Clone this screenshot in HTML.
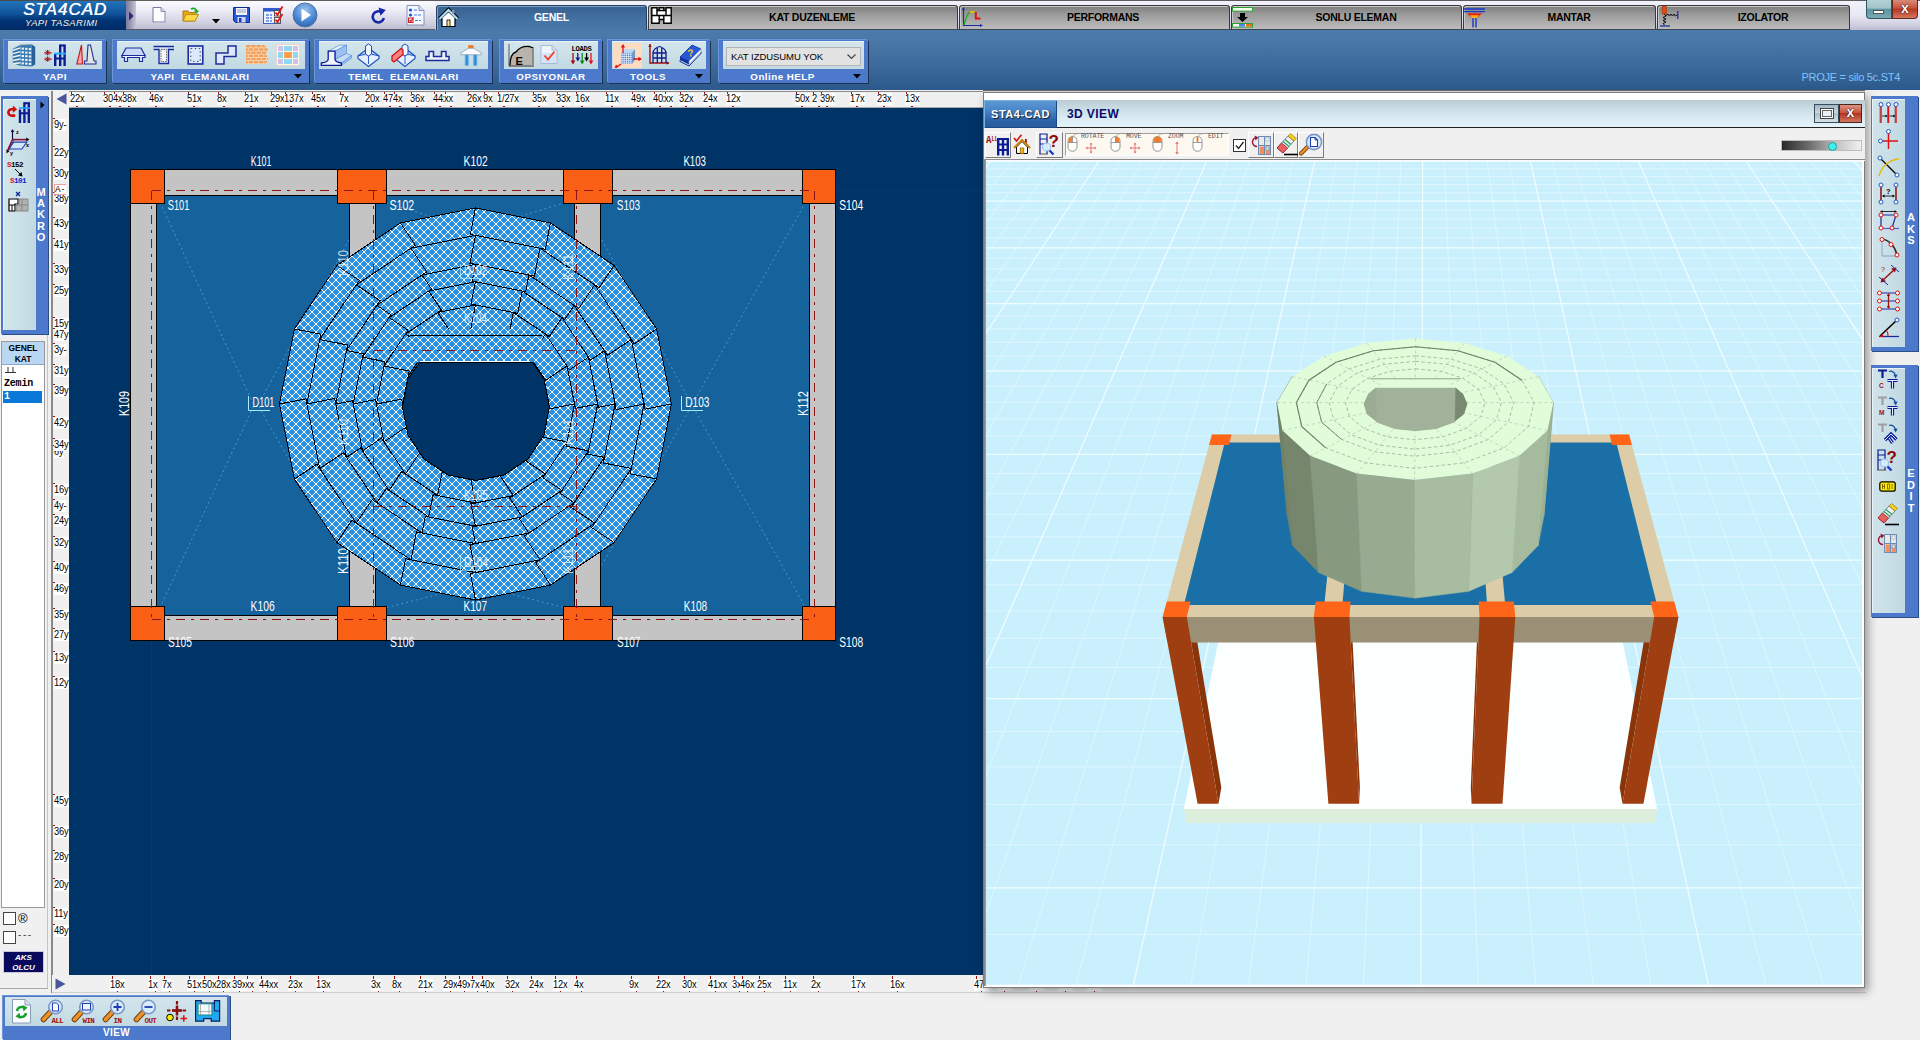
<!DOCTYPE html>
<html><head><meta charset="utf-8"><title>STA4CAD</title>
<style>

html,body{margin:0;padding:0}
body{width:1920px;height:1040px;overflow:hidden;background:#f0f0f0;position:relative;font-family:"Liberation Sans",sans-serif;font-size:11px;color:#000}
.a{position:absolute}
svg{position:absolute;overflow:visible}
.rib{left:0;top:30px;width:1920px;height:60px;background:linear-gradient(#4b7aab 0%,#4a78a8 15%,#3d6a9c 60%,#2b598b 100%)}
.grp{background:#4c79cb;box-shadow:1px 1px 0 #1c3050, -1px -1px 0 #6d95d8;}
.grp .in{position:absolute;left:4px;right:4px;top:1px;height:28px;background:linear-gradient(#d4e6ec,#c2d9e2);box-shadow:inset 0 1px 0 #e8f4f8}
.grp .lb{position:absolute;left:0;right:0;top:30px;height:13px;line-height:13px;text-align:center;color:#fff;font-weight:bold;font-size:9.8px;letter-spacing:.45px;white-space:pre}
.tab{top:5px;height:24px;background:linear-gradient(#7e7e7e 0%,#9a9a9a 35%,#bcbcbc 100%);border:1px solid #3a3a3a;border-bottom:none;border-radius:3px 3px 0 0;box-sizing:border-box;font-weight:bold;font-size:11px;line-height:23px;text-align:center;color:#000;box-shadow:inset 1px 1px 0 #c8c8c8}
.rl{position:absolute;font-size:10px;line-height:12px;letter-spacing:-.2px;transform:scaleX(.93);transform-origin:0 0;background:#fff;white-space:nowrap;color:#000}
.vt{position:absolute;color:#fff;font-weight:bold;font-size:11px;line-height:11.5px;text-align:center;width:10px}

</style></head>
<body>
<div class="a" style="left:0;top:0;width:1920px;height:30px;background:linear-gradient(#f2f2fc 0%,#e9e9f5 50%,#cdcddf 85%,#bcbcd0 100%)"></div>
<div class="a" style="left:0;top:0;width:1920px;height:1px;background:#5d5d5d"></div>
<div class="a" style="left:0;top:0;width:126px;height:30px;background:linear-gradient(#2476bd 0%,#10539a 45%,#003273 70%,#002b66 100%);overflow:hidden"><div class="a" style="left:0;top:0;width:127px;height:1px;background:#4a4a4a"></div><div class="a" style="left:23px;top:1px;width:90px;font-style:italic;font-size:17px;line-height:18px;color:#fff;letter-spacing:1px;text-shadow:.4px 0 0 #fff;white-space:nowrap">STA4CAD</div><div class="a" style="left:25px;top:17px;width:90px;font-style:italic;font-size:9.5px;line-height:11px;color:#f4f0e4;letter-spacing:.35px;white-space:nowrap">YAPI TASARIMI</div></div>
<div class="a" style="left:126px;top:1px;width:309px;height:28px;background:linear-gradient(#fbfbff 0%,#ececf6 35%,#d2d2e2 75%,#bcbcd0 100%);border-bottom:1px solid #5a5a6a"></div>
<div class="a" style="left:126px;top:1px;width:10px;height:28px;background:linear-gradient(90deg,#7c7c9c,#a4a4bc 60%,#c8c8da)"></div>
<svg class="a" style="left:128px;top:11px" width="6" height="10" viewBox="0 0 6 10"><path d="M1 0.5 L5.5 5 L1 9.5Z" fill="#26267a"/></svg>
<div class="a" style="left:436px;top:5px;width:211px;height:26px;background:linear-gradient(#35608f,#4573a4 60%,#4a78a8);border:1px solid #243f60;border-bottom:none;border-radius:3px 3px 0 0;box-sizing:border-box;box-shadow:inset 1px 1px 0 #7da0c6"></div>
<div class="a" style="left:436px;top:5px;width:211px;height:25px;line-height:25px;text-align:center;padding-left:20px;box-sizing:border-box;color:#fff;font-weight:bold;font-size:10.5px;letter-spacing:-.2px">GENEL</div>
<div class="a tab" style="left:648px;width:310px"></div>
<div class="a" style="left:712px;top:5px;width:200px;height:25px;line-height:25px;text-align:center;font-weight:bold;font-size:10.5px;letter-spacing:-.25px">KAT DUZENLEME</div>
<div class="a tab" style="left:959px;width:271px"></div>
<div class="a" style="left:1003px;top:5px;width:200px;height:25px;line-height:25px;text-align:center;font-weight:bold;font-size:10.5px;letter-spacing:-.25px">PERFORMANS</div>
<div class="a tab" style="left:1231px;width:231px"></div>
<div class="a" style="left:1256px;top:5px;width:200px;height:25px;line-height:25px;text-align:center;font-weight:bold;font-size:10.5px;letter-spacing:-.25px">SONLU ELEMAN</div>
<div class="a tab" style="left:1463px;width:193px"></div>
<div class="a" style="left:1469px;top:5px;width:200px;height:25px;line-height:25px;text-align:center;font-weight:bold;font-size:10.5px;letter-spacing:-.25px">MANTAR</div>
<div class="a tab" style="left:1657px;width:193px"></div>
<div class="a" style="left:1663px;top:5px;width:200px;height:25px;line-height:25px;text-align:center;font-weight:bold;font-size:10.5px;letter-spacing:-.25px">IZOLATOR</div>
<div class="a" style="left:648px;top:29px;width:1202px;height:1px;background:#3c4652"></div>
<div class="a" style="left:1866px;top:0;width:26px;height:19px;background:linear-gradient(#b4d2d6,#a0c4ca 45%,#5e94a0 52%,#7aaab4);border:1px solid #2e5662;border-top:none;border-radius:0 0 0 4px;box-sizing:border-box"></div>
<div class="a" style="left:1873px;top:10px;width:11px;height:4px;background:#fff;border:1px solid #555;box-sizing:border-box"></div>
<div class="a" style="left:1892px;top:0;width:26px;height:19px;background:linear-gradient(#d98a7a,#c8523d 45%,#b7351f 50%,#d47762);border:1px solid #5e2a20;border-top:none;border-radius:0 0 4px 0;box-sizing:border-box;color:#fff;font-weight:bold;font-size:14px;line-height:17px;text-align:center;text-shadow:0 0 1px #000,0 0 1px #000">x</div>
<div class="a rib"></div>
<div class="a grp" style="left:4px;top:40px;width:102px;height:43px"><div class="in"></div><div class="lb" style="">YAPI</div></div>
<div class="a grp" style="left:113px;top:40px;width:196px;height:43px"><div class="in"></div><div class="lb" style="padding-right:22px;box-sizing:border-box;">YAPI  ELEMANLARI</div><svg style="left:181px;top:34px" width="8" height="5"><path d="M0 0H8L4 4.5Z" fill="#000"/></svg></div>
<div class="a grp" style="left:315px;top:40px;width:177px;height:43px"><div class="in"></div><div class="lb" style="">TEMEL  ELEMANLARI</div></div>
<div class="a grp" style="left:500px;top:40px;width:102px;height:43px"><div class="in"></div><div class="lb" style="">OPSIYONLAR</div></div>
<div class="a grp" style="left:608px;top:40px;width:102px;height:43px"><div class="in"></div><div class="lb" style="padding-right:22px;box-sizing:border-box;">TOOLS</div><svg style="left:87px;top:34px" width="8" height="5"><path d="M0 0H8L4 4.5Z" fill="#000"/></svg></div>
<div class="a grp" style="left:719px;top:40px;width:149px;height:43px"><div class="in"></div><div class="lb" style="padding-right:22px;box-sizing:border-box;">Online HELP</div><svg style="left:134px;top:34px" width="8" height="5"><path d="M0 0H8L4 4.5Z" fill="#000"/></svg></div>
<div class="a" style="left:726px;top:47px;width:135px;height:19px;background:#e2e2e2;border:1px solid #b4b4b4;box-sizing:border-box;font-size:9.5px;line-height:17px;padding-left:4px;letter-spacing:-.05px;white-space:nowrap">KAT IZDUSUMU YOK</div>
<svg class="a" style="left:847px;top:54px" width="9" height="6" viewBox="0 0 9 6"><path d="M0.5 0.5L4.5 4.5L8.5 0.5" fill="none" stroke="#444" stroke-width="1.2"/></svg>
<div class="a" style="left:1780px;top:70px;width:120px;text-align:right;font-size:11px;line-height:14px;color:#80c2fa;letter-spacing:-.27px;white-space:nowrap">PROJE = silo 5c.ST4</div>
<svg class="a" style="left:152px;top:7px" width="14" height="16" viewBox="0 0 14 16"><path d="M1 .5H9L13 4.5V15H1Z" fill="#fdfdff" stroke="#7878a0"/><path d="M9 .5V4.5H13" fill="#dcdcec" stroke="#8c8cac"/><path d="M2 15.5H13.5V5" fill="none" stroke="#b8b8d0"/></svg>
<svg class="a" style="left:182px;top:6px" width="18" height="17" viewBox="0 0 18 17"><path d="M1 5H6L7.5 6.5H13V15H1Z" fill="#e8a818" stroke="#b07808"/><path d="M1 15L4 8.5H16.5L13 15Z" fill="#fcd848" stroke="#c08c10"/><path d="M9 3C11.5 1.5 14 2.5 14.5 5" fill="none" stroke="#18a828" stroke-width="1.8"/><path d="M12 4.5H17L14.5 8Z" fill="#18a828"/></svg>
<svg class="a" style="left:212px;top:19px" width="8" height="5" viewBox="0 0 8 5"><path d="M0 0H8L4 4.5Z" fill="#000"/></svg>
<svg class="a" style="left:233px;top:7px" width="17" height="16" viewBox="0 0 17 16"><path d="M.5 .5H16.5V15.5H2.5L.5 13.5Z" fill="#2858d8" stroke="#102c90"/><rect x="3" y="1" width="11" height="7" fill="#f4f4fc"/><path d="M4 3H13M4 5H13" stroke="#a0a0c0"/><rect x="4.5" y="10" width="8" height="5.5" fill="#cfd6ee"/><rect x="6" y="11" width="2.5" height="4" fill="#1c3cae"/></svg>
<svg class="a" style="left:263px;top:5px" width="21" height="20" viewBox="0 0 21 20"><rect x=".5" y="3.5" width="17" height="15" fill="#eef4ff" stroke="#3c64c8"/><rect x=".5" y="3.5" width="17" height="3" fill="#2c58d0"/><path d="M3 10H9M3 13H9M3 16H9" stroke="#5c84dc" stroke-width="1.4" stroke-dasharray="3 1"/><rect x="11.5" y="5.5" width="6" height="5.5" fill="#fff" stroke="#555"/><rect x="11.5" y="12.5" width="6" height="5.5" fill="#fff" stroke="#555"/><path d="M12.5 7.5L14.5 10L19.5 1.5M12.5 14.5L14.5 17L19.5 9" fill="none" stroke="#e81010" stroke-width="1.8"/></svg>
<svg class="a" style="left:292px;top:2px" width="26" height="26" viewBox="0 0 26 26"><defs><radialGradient id="pg" cx=".5" cy=".3" r=".8"><stop offset="0" stop-color="#9cc4ee"/><stop offset=".55" stop-color="#4a88d4"/><stop offset="1" stop-color="#2858a8"/></radialGradient></defs><circle cx="13" cy="13" r="12" fill="url(#pg)" stroke="#54749c" stroke-width="1"/><path d="M9.5 6.5L19 13L9.5 19.5Z" fill="#fff"/></svg>
<svg class="a" style="left:370px;top:7px" width="17" height="17" viewBox="0 0 17 17"><path d="M11.5 5.2A5.6 5.6 0 1 0 13.8 11" fill="none" stroke="#1428a8" stroke-width="2.6"/><path d="M8.5 .5L15.8 3L10.5 8.8Z" fill="#1428a8"/></svg>
<svg class="a" style="left:406px;top:5px" width="19" height="21" viewBox="0 0 19 21"><path d="M1 .5H13L18 5.5V20H1Z" fill="#f4f8ff" stroke="#8890b8"/><path d="M13 .5V5.5H18" fill="#d8dcf0" stroke="#8890b8"/><circle cx="4.5" cy="5" r="1.6" fill="#1c50d0"/><circle cx="4.5" cy="10" r="1.6" fill="#1c50d0"/><path d="M8 5H11M8 10H15M9 15.5H15" stroke="#4c7cdc" stroke-width="1.2" stroke-dasharray="3 1"/><rect x="2.5" y="13" width="4.5" height="4.5" fill="#fff" stroke="#d02020"/><path d="M3.5 15L4.8 16.5L7.5 12.5" fill="none" stroke="#d02020" stroke-width="1.3"/></svg>
<svg class="a" style="left:437px;top:8px" width="23" height="20" viewBox="0 0 23 20"><path d="M2.5 11L11.5 2L20.5 11" fill="none" stroke="#000" stroke-width="4.4"/><path d="M5 9.5V18.5H18V9.5L11.5 3.5Z" fill="#fff" stroke="#000" stroke-width="1.2"/><path d="M2.5 11L11.5 2L20.5 11" fill="none" stroke="#a8e0ff" stroke-width="2.2"/><rect x="10" y="12" width="3" height="6.5" fill="#f4e490" stroke="#000" stroke-width=".8"/><rect x="15.2" y="2" width="2" height="4" fill="#999"/></svg>
<svg class="a" style="left:651px;top:7px" width="21" height="17" viewBox="0 0 21 17"><path d="M.8 .8H6V3.5H8.2V.8H12.8V3.5H15V.8H20.2V16.2H12.8V12.5H8.2V16.2H.8Z" fill="#fff" stroke="#000" stroke-width="1.4"/><path d="M.8 8.5H20.2M6 3.5V8.5M15 3.5V8.5M8.2 3.5H12.8M8.2 12.5V8.5M12.8 12.5V8.5" fill="none" stroke="#000" stroke-width="1.4"/></svg>
<svg class="a" style="left:961px;top:7px" width="22" height="21" viewBox="0 0 22 21"><path d="M2.5 1V18.5H21" fill="none" stroke="#1c2ca8" stroke-width="1.2"/><path d="M2.5 0L1 3H4ZM22 18.5L19 17V20Z" fill="#1c2ca8"/><path d="M3 18C5 10 7 6 9 5" fill="none" stroke="#20b020" stroke-width="1.4"/><path d="M9 5H14" stroke="#f0c000" stroke-width="1.6"/><path d="M14.8 5V11.5H19.5" fill="none" stroke="#e01010" stroke-width="2"/></svg>
<svg class="a" style="left:1232px;top:7px" width="21" height="21" viewBox="0 0 21 21"><rect x=".5" y=".5" width="20" height="3.6" fill="#f8fff0" stroke="#30a030"/><path d="M8 6H13V10H16L10.5 15L5 10H8Z" fill="#000"/><rect x=".5" y="16.5" width="20" height="3.6" fill="#f8f8f8" stroke="#30a030"/><rect x="7" y="17" width="6" height="2.6" fill="#4888e8"/><rect x="14" y="17" width="6" height="2.6" fill="#f07010"/></svg>
<svg class="a" style="left:1464px;top:8px" width="22" height="20" viewBox="0 0 22 20"><path d="M0 1H21M0 3.6H21" stroke="#1838c8" stroke-width="1.3"/><path d="M3 5.2H18L13.2 10H7.8Z" fill="#e82010"/><path d="M6 7.2H15L13.2 10H7.8Z" fill="#ffb010"/><path d="M9 10V19.5M12 10V19.5" stroke="#1838c8" stroke-width="1.4"/></svg>
<svg class="a" style="left:1660px;top:6px" width="20" height="22" viewBox="0 0 20 22"><rect x="2.2" y=".5" width="4" height="7.5" fill="#f04808" stroke="#a03000" stroke-width=".6"/><path d="M4.2 8L6 10L3 11.5L6 13L3 14.5L6 16L3 17.5L4.5 19" fill="none" stroke="#000" stroke-width=".9"/><path d="M0 20H10" stroke="#2030a0" stroke-width="1.3"/><path d="M6 9.5L8 8L9.5 10L11 8L12.5 10L14 8L15.5 10L17 9" fill="none" stroke="#000" stroke-width=".9"/><path d="M17.8 5V13" stroke="#2030a0" stroke-width="1.3"/></svg>
<svg class="a" style="left:12px;top:43px" width="24" height="24" viewBox="0 0 24 24"><path d="M.8 5.5L8.6 1.5V22.8L.8 20.5Z" fill="#3474a8"/><path d="M8.6 1.5L19.6 1V23.4L8.6 22.8Z" fill="#3c7cb0"/><path d="M19.6 1L23.2 3.4V21.4L19.6 23.4Z" fill="#28609a"/><path d="M.8 5.5L8.6 1.5L19.6 1L23.2 3.4" fill="none" stroke="#c8d0d8" stroke-width=".8"/><path d="M1 7.2L8.4 4.9" stroke="#eef4fa" stroke-width="1.5"/><path d="M1 10.6L8.4 8.6" stroke="#eef4fa" stroke-width="1.5"/><path d="M1 14.0L8.4 12.3" stroke="#eef4fa" stroke-width="1.5"/><path d="M1 17.4L8.4 16.0" stroke="#eef4fa" stroke-width="1.5"/><path d="M1 20.8L8.4 19.7" stroke="#eef4fa" stroke-width="1.5"/><rect x="9.6" y="4.6" width="2.3" height="2" fill="#f4f8fc"/><rect x="13.2" y="4.8" width="2.3" height="2" fill="#f4f8fc"/><rect x="16.8" y="5.1" width="2.3" height="2" fill="#f4f8fc"/><rect x="9.6" y="8.3" width="2.3" height="2" fill="#f4f8fc"/><rect x="13.2" y="8.6" width="2.3" height="2" fill="#f4f8fc"/><rect x="16.8" y="8.8" width="2.3" height="2" fill="#f4f8fc"/><rect x="9.6" y="12.0" width="2.3" height="2" fill="#f4f8fc"/><rect x="13.2" y="12.2" width="2.3" height="2" fill="#f4f8fc"/><rect x="16.8" y="12.5" width="2.3" height="2" fill="#f4f8fc"/><rect x="9.6" y="15.7" width="2.3" height="2" fill="#f4f8fc"/><rect x="13.2" y="16.0" width="2.3" height="2" fill="#f4f8fc"/><rect x="16.8" y="16.2" width="2.3" height="2" fill="#f4f8fc"/><rect x="9.6" y="19.4" width="2.3" height="2" fill="#f4f8fc"/><rect x="13.2" y="19.6" width="2.3" height="2" fill="#f4f8fc"/><rect x="16.8" y="19.9" width="2.3" height="2" fill="#f4f8fc"/></svg>
<svg class="a" style="left:44px;top:44px" width="23" height="23" viewBox="0 0 23 23"><path d="M3.6 6V17.5" stroke="#a01010" stroke-width="1.2" stroke-dasharray="2 1.2"/><path d="M.3 8.8H7.6M.3 15.2H7.6" stroke="#a01010" stroke-width="1.2"/><path d="M1.6 6.6L5.6 10.8M5.6 6.6L1.6 10.8M1.6 13.2L5.6 17.4M5.6 13.2L1.6 17.4" stroke="#a01010" stroke-width=".8"/><path d="M11.2 22V9M16.2 22V.6M20.6 22V.6" stroke="#0c1c94" stroke-width="2.4"/><path d="M16.2 1.6H20.6M10 14.6H20.6" stroke="#0c1c94" stroke-width="2"/><path d="M10 9.6H21.6" stroke="#20b0ff" stroke-width="1.8"/></svg>
<svg class="a" style="left:76px;top:44px" width="21" height="22" viewBox="0 0 21 22"><path d="M5.5 1L6.5 20H.8Z" fill="#f8a8a8" stroke="#c01818" stroke-width="1.1"/><path d="M12 1H14.5L18 17H20V20H8.5V17H11Z" fill="#e4e4e4" stroke="#1c2c9c" stroke-width="1.1"/></svg>
<svg class="a" style="left:121px;top:47px" width="25" height="16" viewBox="0 0 25 16"><path d="M5 1H20L24 8.5H1Z" fill="#c8d8f8" stroke="#1c2c9c" stroke-width="1.2"/><path d="M1 8.5H24V10.5H21.5V14.5H18.5V10.5H6.5V14.5H3.5V10.5H1Z" fill="#eef2ff" stroke="#1c2c9c" stroke-width="1.2"/></svg>
<svg class="a" style="left:153px;top:45px" width="22" height="20" viewBox="0 0 22 20"><path d="M.5 1.5H21M.5 4.5H6V18.5H15.5V4.5H21" fill="#e8ecf8" stroke="#1c2c9c" stroke-width="1.4"/><rect x="8" y="4.5" width="5.5" height="12" fill="#f8f8f8" stroke="#444" stroke-width=".8" stroke-dasharray="1.5 1"/></svg>
<svg class="a" style="left:187px;top:45px" width="17" height="20" viewBox="0 0 17 20"><rect x="1.2" y="1" width="14.6" height="18" fill="#dce8fc" stroke="#1c2c9c" stroke-width="1.6"/><rect x="3.8" y="3.6" width="9.4" height="12.8" fill="none" stroke="#333" stroke-width=".9" stroke-dasharray="1.4 2.6"/></svg>
<svg class="a" style="left:215px;top:45px" width="22" height="20" viewBox="0 0 22 20"><path d="M13 1H21V11.5H9V19H1V8H13Z" fill="#dce8fc" stroke="#1c2c9c" stroke-width="1.5"/></svg>
<svg class="a" style="left:246px;top:45px" width="22" height="20" viewBox="0 0 22 20"><clipPath id="bk"><path d="M0 0H18L22 4L20 9L22 14L20 19H0Z"/></clipPath><g clip-path="url(#bk)"><rect width="22" height="20" fill="#fbe2c4"/><rect x="0.0" y="0.0" width="4.5" height="2.5" fill="#f0a05c"/><rect x="5.2" y="0.0" width="4.5" height="2.5" fill="#f0a05c"/><rect x="10.4" y="0.0" width="4.5" height="2.5" fill="#f0a05c"/><rect x="15.6" y="0.0" width="4.5" height="2.5" fill="#f0a05c"/><rect x="20.8" y="0.0" width="4.5" height="2.5" fill="#f0a05c"/><rect x="26.0" y="0.0" width="4.5" height="2.5" fill="#f0a05c"/><rect x="-2.6" y="3.2" width="4.5" height="2.5" fill="#f0a05c"/><rect x="2.6" y="3.2" width="4.5" height="2.5" fill="#f0a05c"/><rect x="7.8" y="3.2" width="4.5" height="2.5" fill="#f0a05c"/><rect x="13.0" y="3.2" width="4.5" height="2.5" fill="#f0a05c"/><rect x="18.2" y="3.2" width="4.5" height="2.5" fill="#f0a05c"/><rect x="23.4" y="3.2" width="4.5" height="2.5" fill="#f0a05c"/><rect x="0.0" y="6.4" width="4.5" height="2.5" fill="#f0a05c"/><rect x="5.2" y="6.4" width="4.5" height="2.5" fill="#f0a05c"/><rect x="10.4" y="6.4" width="4.5" height="2.5" fill="#f0a05c"/><rect x="15.6" y="6.4" width="4.5" height="2.5" fill="#f0a05c"/><rect x="20.8" y="6.4" width="4.5" height="2.5" fill="#f0a05c"/><rect x="26.0" y="6.4" width="4.5" height="2.5" fill="#f0a05c"/><rect x="-2.6" y="9.6" width="4.5" height="2.5" fill="#f0a05c"/><rect x="2.6" y="9.6" width="4.5" height="2.5" fill="#f0a05c"/><rect x="7.8" y="9.6" width="4.5" height="2.5" fill="#f0a05c"/><rect x="13.0" y="9.6" width="4.5" height="2.5" fill="#f0a05c"/><rect x="18.2" y="9.6" width="4.5" height="2.5" fill="#f0a05c"/><rect x="23.4" y="9.6" width="4.5" height="2.5" fill="#f0a05c"/><rect x="0.0" y="12.8" width="4.5" height="2.5" fill="#f0a05c"/><rect x="5.2" y="12.8" width="4.5" height="2.5" fill="#f0a05c"/><rect x="10.4" y="12.8" width="4.5" height="2.5" fill="#f0a05c"/><rect x="15.6" y="12.8" width="4.5" height="2.5" fill="#f0a05c"/><rect x="20.8" y="12.8" width="4.5" height="2.5" fill="#f0a05c"/><rect x="26.0" y="12.8" width="4.5" height="2.5" fill="#f0a05c"/><rect x="-2.6" y="16.0" width="4.5" height="2.5" fill="#f0a05c"/><rect x="2.6" y="16.0" width="4.5" height="2.5" fill="#f0a05c"/><rect x="7.8" y="16.0" width="4.5" height="2.5" fill="#f0a05c"/><rect x="13.0" y="16.0" width="4.5" height="2.5" fill="#f0a05c"/><rect x="18.2" y="16.0" width="4.5" height="2.5" fill="#f0a05c"/><rect x="23.4" y="16.0" width="4.5" height="2.5" fill="#f0a05c"/></g></svg>
<svg class="a" style="left:276px;top:44px" width="24" height="22" viewBox="0 0 24 22"><rect x=".5" y=".5" width="23" height="21" fill="#fff8ec" stroke="#e8d8c8"/><rect x="2" y="2" width="5" height="5" fill="#d0c0f0"/><rect x="8" y="2" width="8" height="5" fill="#90d8f0"/><rect x="17" y="2" width="5" height="5" fill="#d0c0f0"/><rect x="2" y="8" width="5" height="6" fill="#90d8f0"/><rect x="8" y="8" width="8" height="6" fill="#f8a050"/><rect x="17" y="8" width="5" height="6" fill="#90d8f0"/><rect x="2" y="15" width="5" height="5" fill="#d0c0f0"/><rect x="8" y="15" width="8" height="5" fill="#90d8f0"/><rect x="17" y="15" width="5" height="5" fill="#d0c0f0"/></svg>
<svg class="a" style="left:320px;top:44px" width="32" height="23" viewBox="0 0 32 23"><path d="M8.2 7.2L19.5 1.2H26.5L15 7.2Z" fill="#e4f0ff" stroke="#5890e0" stroke-width=".7"/><path d="M15 7.2L26.5 1.2V9.5L15 15.5Z" fill="#9cc0f0" stroke="#5890e0" stroke-width=".7"/><path d="M15 15.5L26.5 9.5L31.5 11.5L21.4 19Z" fill="#c8dcf8" stroke="#5890e0" stroke-width=".7"/><path d="M21.4 19L31.5 11.5V14.2L21.4 21.4Z" fill="#9cc0f0" stroke="#5890e0" stroke-width=".7"/><path d="M8.2 7.2H15V15C15 17 18 18.6 21.4 19V21.4H1.3V19C5 18.6 8.2 17 8.2 15Z" fill="#eef4ff" stroke="#0c1c94" stroke-width="1.3"/></svg>
<svg class="a" style="left:357px;top:43px" width="23" height="24" viewBox="0 0 23 24"><path d="M11.5 5L22 13L11.5 21L1 13Z" fill="#c4dcf8" stroke="#1c4cc0" stroke-width="1.2"/><path d="M1 13V15.5L11.5 23.5L22 15.5V13" fill="#e4f0ff" stroke="#1c4cc0" stroke-width="1.1"/><path d="M8.5 3L11.5 1L14.5 3V11L11.5 13L8.5 11Z" fill="#f0f8ff" stroke="#1c4cc0" stroke-width="1"/><path d="M8.5 11L1 13M14.5 11L22 13M11.5 13V21" stroke="#1c4cc0" stroke-width=".9"/></svg>
<svg class="a" style="left:391px;top:43px" width="25" height="24" viewBox="0 0 25 24"><path d="M14 5L24 13L14 21L4 13Z" fill="#c4dcf8" stroke="#1c4cc0" stroke-width="1.2"/><path d="M4 13V15.5L14 23.5L24 15.5V13" fill="#e4f0ff" stroke="#1c4cc0" stroke-width="1.1"/><path d="M11 3L14 1L17 3V11L14 13L11 11Z" fill="#f0f8ff" stroke="#1c4cc0" stroke-width="1"/><path d="M17 11L24 13M14 13V21" stroke="#1c4cc0" stroke-width=".9"/><path d="M1 13L10 5.5L12 7V11.5L3 19L1 17.5Z" fill="#f88080" stroke="#d01010" stroke-width="1.3"/></svg>
<svg class="a" style="left:425px;top:50px" width="25" height="12" viewBox="0 0 25 12"><path d="M1 10.5V6.5H4V1.5H8.5V6.5H16.5V1.5H21V6.5H24V10.5Z" fill="#eef2ff" stroke="#1c2c9c" stroke-width="1.5"/></svg>
<svg class="a" style="left:460px;top:44px" width="23" height="23" viewBox="0 0 23 23"><defs><linearGradient id="plg" x1="0" x2="1" y1="0" y2="0"><stop offset="0" stop-color="#7cc4f0"/><stop offset=".5" stop-color="#2480d0"/><stop offset="1" stop-color="#8cd0f8"/></linearGradient></defs><rect x="8.2" y="1.2" width="5.4" height="3" fill="#f07818"/><path d="M8.2 4.3H13.6L21.4 8.8V10.8H.9V8.8Z" fill="#f8fbff" stroke="#98a4b0" stroke-width=".9"/><rect x="4.6" y="10.8" width="4.6" height="10.8" fill="url(#plg)"/><rect x="13" y="10.8" width="4.6" height="10.8" fill="url(#plg)"/></svg>
<svg class="a" style="left:507px;top:43px" width="27" height="24" viewBox="0 0 27 24"><path d="M2 1V23" stroke="#707070" stroke-width="1.2"/><path d="M3 23C3 14 5 10 9 9C12 5 16 3 22 3.5L26 5V23Z" fill="#b8b4ac" stroke="#000" stroke-width="1.3"/><path d="M26 5V23H3" fill="none" stroke="#d0d0d0"/><text x="8.5" y="21.5" font-family="Liberation Sans,sans-serif" font-size="11" font-weight="bold" fill="#000">E</text></svg>
<svg class="a" style="left:540px;top:45px" width="20" height="20" viewBox="0 0 20 20"><path d="M1 .5H12L17 5V18.5H1Z" fill="#f0f4fc" stroke="#a8b8d8"/><path d="M12 .5V5H17" fill="#d4dcf0" stroke="#a8b8d8"/><path d="M2 8H16V18H2Z" fill="#c8dcf8" opacity=".7"/><path d="M4.5 10.5L8 14.5L14.5 6.5" fill="none" stroke="#f04020" stroke-width="1.8"/></svg>
<svg class="a" style="left:570px;top:44px" width="24" height="22" viewBox="0 0 24 22"><text x="1.5" y="6.5" font-family="Liberation Mono,monospace" font-size="7.2" font-weight="bold" fill="#000" letter-spacing="-.3">LOADS</text><path d="M3 9V19" stroke="#a01010" stroke-width="1.3"/><path d="M0.6000000000000001 16.5L3 20.5L5.4 16.5Z" fill="#a01010"/><path d="M7.8 9V16" stroke="#0c1c94" stroke-width="1.3"/><path d="M5.4 13.5L7.8 17.5L10.2 13.5Z" fill="#0c1c94"/><path d="M12.2 9V19" stroke="#108818" stroke-width="1.3"/><path d="M9.799999999999999 16.5L12.2 20.5L14.6 16.5Z" fill="#108818"/><path d="M16.6 9V16" stroke="#000" stroke-width="1.3"/><path d="M14.200000000000001 13.5L16.6 17.5L19.0 13.5Z" fill="#000"/><path d="M21 9V19" stroke="#e81010" stroke-width="1.3"/><path d="M18.6 16.5L21 20.5L23.4 16.5Z" fill="#e81010"/></svg>
<div class="a" style="left:613px;top:43px;width:29px;height:25px;background:#fcdcc0"></div>
<svg class="a" style="left:614px;top:44px" width="28" height="24" viewBox="0 0 28 24"><path d="M7 9L11 5H21L18 9Z" fill="#b8d8f8"/><path d="M18 9L21 5V16L18 20Z" fill="#7098c8"/><rect x="7" y="9" width="11" height="11" fill="#3878e0"/><path d="M8.0 9V20M7 10.2H18" stroke="#fff" stroke-width=".7"/><path d="M10.2 9V20M7 12.4H18" stroke="#fff" stroke-width=".7"/><path d="M12.4 9V20M7 14.6H18" stroke="#fff" stroke-width=".7"/><path d="M14.6 9V20M7 16.8H18" stroke="#fff" stroke-width=".7"/><path d="M16.8 9V20M7 19.0H18" stroke="#fff" stroke-width=".7"/><path d="M9 9V2M19 15H26M7 20L2 23.5" stroke="#e01010" stroke-width="1.3"/><path d="M9 0L6.8 3.5H11.2ZM28 15L24.5 12.8V17.2ZM.5 24L2 20.5L4.5 23Z" fill="#e01010"/></svg>
<svg class="a" style="left:648px;top:44px" width="22" height="22" viewBox="0 0 22 22"><path d="M2 0V19H21" fill="none" stroke="#a01010" stroke-width="1.4"/><path d="M2 0L.3 3H3.7ZM21.5 19L18.5 17.3V20.7Z" fill="#a01010"/><path d="M5 19V8C6 5 8 3.5 11.5 2.5C15 3.5 17 5 18 8V19M9.3 19V4M13.7 19V4M5 9H18M5 14H18" fill="none" stroke="#0c1c94" stroke-width="1.3"/></svg>
<svg class="a" style="left:679px;top:44px" width="23" height="22" viewBox="0 0 23 22"><path d="M1 13L13 1L22 5L10 17Z" fill="#2858d8" stroke="#1030a0" stroke-width=".8"/><path d="M1 13V16L10 20.5V17Z" fill="#1030a0"/><path d="M10 17L22 5V8L10 20.5Z" fill="#f4f8ff" stroke="#8090c0" stroke-width=".6"/><path d="M1 16V17.5L10 22L22 9.5V8" fill="none" stroke="#1030a0" stroke-width="1"/><text x="8.5" y="12.5" font-family="Liberation Sans,sans-serif" font-size="10" font-weight="bold" fill="#f8d020" transform="rotate(-8 11 9)">?</text></svg>
<div class="a" style="left:1px;top:96px;width:47px;height:238px;background:#4c79cb;box-shadow:1px 1px 0 #2a4f86"></div>
<div class="a" style="left:3px;top:99px;width:33px;height:231px;background:linear-gradient(90deg,#d4e6ec,#c2d9e2);box-shadow:inset 1px 1px 0 #eaf4f8"></div>
<svg class="a" style="left:40px;top:101px" width="5" height="8" viewBox="0 0 5 8"><path d="M.5 .5L4.5 4L.5 7.5Z" fill="#000"/></svg>
<div class="vt" style="left:36px;top:187px;font-size:11px;line-height:11.2px">M<br>A<br>K<br>R<br>O</div>
<svg class="a" style="left:6px;top:101px" width="26" height="23" viewBox="0 0 26 23"><path d="M9.2 14.6H5.6A3.1 3.1 0 0 1 5.6 8.2H7.5" fill="none" stroke="#d01010" stroke-width="2.6"/><path d="M6.8 4.4L11.2 8.2L6.8 12Z" fill="#d01010"/><path d="M14 22V8.5M18.4 22V1.2M22.8 22V1.2" stroke="#0c1c94" stroke-width="2.4"/><path d="M18.4 2.2H22.8M13 12.2H22.8" stroke="#0c1c94" stroke-width="2"/><path d="M13 7H24" stroke="#20a0ff" stroke-width="1.6"/></svg>
<svg class="a" style="left:6px;top:129px" width="26" height="26" viewBox="0 0 26 26"><path d="M7.75 13.1H20.9L15.9 20H2.75Z" fill="#cfe8f8" stroke="#2838b0" stroke-width="1.1"/><path d="M6.5 1.5V10.6" stroke="#101040" stroke-width="1.2"/><path d="M6.5 0L4.7 3H8.3Z" fill="#101040"/><path d="M6.5 10.6H21.5" stroke="#8c1030" stroke-width="1.6"/><path d="M23.5 10.6L20.2 8.6V12.6Z" fill="#101010"/><path d="M6.5 10.6L1.2 22.4" stroke="#8c1030" stroke-width="1.5"/><path d="M7.6 11L2.4 22.6" stroke="#2838b0" stroke-width=".8"/><path d="M.4 24.4L.6 20.8L3.4 22.2Z" fill="#101010"/><text x="10" y="5" font-size="5.5" font-family="Liberation Sans,sans-serif" font-weight="bold">z</text><text x="20" y="17.5" font-size="5.5" font-family="Liberation Sans,sans-serif" font-weight="bold">x</text><text x="4" y="25.5" font-size="5.5" font-family="Liberation Sans,sans-serif" font-weight="bold">y</text></svg>
<svg class="a" style="left:7px;top:160px" width="24" height="24" viewBox="0 0 24 24"><text x="0" y="7" font-size="7.5" font-family="Liberation Mono,monospace" font-weight="bold" fill="#e01010" letter-spacing="-.5">S<tspan fill="#000">152</tspan></text><path d="M8 9L14 15" stroke="#000" stroke-width="1"/><path d="M15.5 16.5L11 15.5L14.5 12Z" fill="#000"/><text x="3" y="23" font-size="7.5" font-family="Liberation Mono,monospace" font-weight="bold" fill="#e01010" letter-spacing="-.5">S<tspan fill="#1020d0">101</tspan></text></svg>
<svg class="a" style="left:8px;top:191px" width="21" height="23" viewBox="0 0 21 23"><path d="M8 1L12 5M12 1L8 5" stroke="#0c1c94" stroke-width="1.2"/><path d="M1 8H10V13H7V20H1Z" fill="#fff" stroke="#000" stroke-width="1.2"/><path d="M1 14H7M4 14V20" stroke="#000" stroke-width="1"/><path d="M11 8H20V20H8V14H11Z" fill="#b0b0b0" stroke="#888" stroke-width="1"/><path d="M14 8V20M8 14H20" stroke="#888" stroke-width="1"/></svg>
<div class="a" style="left:1px;top:341px;width:44px;height:567px;background:#fff;border:1px solid #9a9a9a;box-sizing:border-box"></div>
<div class="a" style="left:2px;top:342px;width:42px;height:23px;background:#b9d7f3;border-bottom:1px solid #8aa8c8;box-sizing:border-box;text-align:center;font-weight:bold;font-size:8.5px;line-height:10.5px;padding-top:1px;letter-spacing:-.1px">GENEL<br>KAT</div>
<svg class="a" style="left:5px;top:367px" width="12" height="7" viewBox="0 0 12 7"><path d="M0 5.5H11M3 0V5.5M8 0V5.5" stroke="#333" stroke-width="1" fill="none"/></svg>
<div class="a" style="left:4px;top:378px;width:40px;font-family:'Liberation Mono',monospace;font-weight:bold;font-size:10px;line-height:12px;letter-spacing:-.2px">Zemin</div>
<div class="a" style="left:3px;top:391px;width:39px;height:12px;background:#0a78d8;color:#fff;font-family:'Liberation Mono',monospace;font-weight:bold;font-size:10px;line-height:12px;padding-left:1px;box-sizing:border-box">1</div>
<div class="a" style="left:47px;top:335px;width:1px;height:654px;background:#c4c4c4"></div>
<div class="a" style="left:0px;top:988px;width:48px;height:1px;background:#a8a8a8"></div>
<div class="a" style="left:3px;top:912px;width:13px;height:13px;background:#fff;border:1px solid #444;box-sizing:border-box"></div>
<div class="a" style="left:18px;top:911px;font-size:13px;line-height:15px">&#174;</div>
<div class="a" style="left:3px;top:931px;width:13px;height:13px;background:#fff;border:1px solid #444;box-sizing:border-box"></div>
<div class="a" style="left:18px;top:929px;font-size:10px;line-height:12px;letter-spacing:1.6px;color:#444">---</div>
<div class="a" style="left:3px;top:951px;width:41px;height:22px;background:#0a0a5c;border:1px solid #c8c8d8;box-sizing:border-box;color:#fff;font-style:italic;font-weight:bold;font-size:8px;line-height:9.5px;text-align:center;padding-top:1px">AKS<br>OLCU</div>
<div class="a" style="left:51px;top:91px;width:933px;height:17px;background:#f0f0f0;border-top:1px solid #8a8a8a;border-bottom:1px solid #a8a8a8;box-sizing:border-box"></div>
<div class="a" style="left:51px;top:91px;width:18px;height:902px;background:#f0f0f0;border-left:2px solid #8a8a8a;box-sizing:border-box"></div>
<div class="a" style="left:52px;top:975px;width:1814px;height:18px;background:#f0f0f0;border-bottom:1px solid #d0d0d0;box-sizing:border-box"></div>
<svg class="a" style="left:56px;top:93px" width="11" height="12" viewBox="0 0 11 12"><path d="M10.5 .5V11.5L.5 6Z" fill="#48569c"/></svg>
<svg class="a" style="left:55px;top:978px" width="11" height="12" viewBox="0 0 11 12"><path d="M.5 .5V11.5L10.5 6Z" fill="#48569c"/></svg>
<div class="a" style="left:52px;top:92px;width:931px;height:16px;overflow:hidden"><span class="rl" style="left:18px;top:1px">22x</span><i style="position:absolute;left:19px;top:0;width:1px;height:2px;background:#a01010"></i><i style="position:absolute;left:24px;top:14px;width:2px;height:1px;background:#a01010"></i><span class="rl" style="left:51px;top:1px">30x</span><i style="position:absolute;left:52px;top:0;width:1px;height:2px;background:#a01010"></i><i style="position:absolute;left:57px;top:14px;width:2px;height:1px;background:#a01010"></i><span class="rl" style="left:61px;top:1px">4x</span><i style="position:absolute;left:62px;top:0;width:1px;height:2px;background:#a01010"></i><i style="position:absolute;left:67px;top:14px;width:2px;height:1px;background:#a01010"></i><span class="rl" style="left:70px;top:1px">38x</span><i style="position:absolute;left:71px;top:0;width:1px;height:2px;background:#a01010"></i><i style="position:absolute;left:76px;top:14px;width:2px;height:1px;background:#a01010"></i><span class="rl" style="left:97px;top:1px">46x</span><i style="position:absolute;left:98px;top:0;width:1px;height:2px;background:#a01010"></i><i style="position:absolute;left:103px;top:14px;width:2px;height:1px;background:#a01010"></i><span class="rl" style="left:135px;top:1px">51x</span><i style="position:absolute;left:136px;top:0;width:1px;height:2px;background:#a01010"></i><i style="position:absolute;left:141px;top:14px;width:2px;height:1px;background:#a01010"></i><span class="rl" style="left:165px;top:1px">8x</span><i style="position:absolute;left:166px;top:0;width:1px;height:2px;background:#a01010"></i><i style="position:absolute;left:171px;top:14px;width:2px;height:1px;background:#a01010"></i><span class="rl" style="left:192px;top:1px">21x</span><i style="position:absolute;left:193px;top:0;width:1px;height:2px;background:#a01010"></i><i style="position:absolute;left:198px;top:14px;width:2px;height:1px;background:#a01010"></i><span class="rl" style="left:218px;top:1px">29x</span><i style="position:absolute;left:219px;top:0;width:1px;height:2px;background:#a01010"></i><i style="position:absolute;left:224px;top:14px;width:2px;height:1px;background:#a01010"></i><span class="rl" style="left:232px;top:1px">137x</span><i style="position:absolute;left:233px;top:0;width:1px;height:2px;background:#a01010"></i><i style="position:absolute;left:238px;top:14px;width:2px;height:1px;background:#a01010"></i><span class="rl" style="left:259px;top:1px">45x</span><i style="position:absolute;left:260px;top:0;width:1px;height:2px;background:#a01010"></i><i style="position:absolute;left:265px;top:14px;width:2px;height:1px;background:#a01010"></i><span class="rl" style="left:287px;top:1px">7x</span><i style="position:absolute;left:288px;top:0;width:1px;height:2px;background:#a01010"></i><i style="position:absolute;left:293px;top:14px;width:2px;height:1px;background:#a01010"></i><span class="rl" style="left:313px;top:1px">20x</span><i style="position:absolute;left:314px;top:0;width:1px;height:2px;background:#a01010"></i><i style="position:absolute;left:319px;top:14px;width:2px;height:1px;background:#a01010"></i><span class="rl" style="left:331px;top:1px">47x</span><i style="position:absolute;left:332px;top:0;width:1px;height:2px;background:#a01010"></i><i style="position:absolute;left:337px;top:14px;width:2px;height:1px;background:#a01010"></i><span class="rl" style="left:341px;top:1px">4x</span><i style="position:absolute;left:342px;top:0;width:1px;height:2px;background:#a01010"></i><i style="position:absolute;left:347px;top:14px;width:2px;height:1px;background:#a01010"></i><span class="rl" style="left:358px;top:1px">36x</span><i style="position:absolute;left:359px;top:0;width:1px;height:2px;background:#a01010"></i><i style="position:absolute;left:364px;top:14px;width:2px;height:1px;background:#a01010"></i><span class="rl" style="left:381px;top:1px">44x</span><i style="position:absolute;left:382px;top:0;width:1px;height:2px;background:#a01010"></i><i style="position:absolute;left:387px;top:14px;width:2px;height:1px;background:#a01010"></i><span class="rl" style="left:392px;top:1px">xx</span><i style="position:absolute;left:393px;top:0;width:1px;height:2px;background:#a01010"></i><i style="position:absolute;left:398px;top:14px;width:2px;height:1px;background:#a01010"></i><span class="rl" style="left:415px;top:1px">26x</span><i style="position:absolute;left:416px;top:0;width:1px;height:2px;background:#a01010"></i><i style="position:absolute;left:421px;top:14px;width:2px;height:1px;background:#a01010"></i><span class="rl" style="left:431px;top:1px">9x</span><i style="position:absolute;left:432px;top:0;width:1px;height:2px;background:#a01010"></i><i style="position:absolute;left:437px;top:14px;width:2px;height:1px;background:#a01010"></i><span class="rl" style="left:445px;top:1px">1/27x</span><i style="position:absolute;left:446px;top:0;width:1px;height:2px;background:#a01010"></i><i style="position:absolute;left:451px;top:14px;width:2px;height:1px;background:#a01010"></i><span class="rl" style="left:480px;top:1px">35x</span><i style="position:absolute;left:481px;top:0;width:1px;height:2px;background:#a01010"></i><i style="position:absolute;left:486px;top:14px;width:2px;height:1px;background:#a01010"></i><span class="rl" style="left:504px;top:1px">33x</span><i style="position:absolute;left:505px;top:0;width:1px;height:2px;background:#a01010"></i><i style="position:absolute;left:510px;top:14px;width:2px;height:1px;background:#a01010"></i><span class="rl" style="left:523px;top:1px">16x</span><i style="position:absolute;left:524px;top:0;width:1px;height:2px;background:#a01010"></i><i style="position:absolute;left:529px;top:14px;width:2px;height:1px;background:#a01010"></i><span class="rl" style="left:553px;top:1px">11x</span><i style="position:absolute;left:554px;top:0;width:1px;height:2px;background:#a01010"></i><i style="position:absolute;left:559px;top:14px;width:2px;height:1px;background:#a01010"></i><span class="rl" style="left:579px;top:1px">49x</span><i style="position:absolute;left:580px;top:0;width:1px;height:2px;background:#a01010"></i><i style="position:absolute;left:585px;top:14px;width:2px;height:1px;background:#a01010"></i><span class="rl" style="left:601px;top:1px">40x</span><i style="position:absolute;left:602px;top:0;width:1px;height:2px;background:#a01010"></i><i style="position:absolute;left:607px;top:14px;width:2px;height:1px;background:#a01010"></i><span class="rl" style="left:612px;top:1px">xx</span><i style="position:absolute;left:613px;top:0;width:1px;height:2px;background:#a01010"></i><i style="position:absolute;left:618px;top:14px;width:2px;height:1px;background:#a01010"></i><span class="rl" style="left:627px;top:1px">32x</span><i style="position:absolute;left:628px;top:0;width:1px;height:2px;background:#a01010"></i><i style="position:absolute;left:633px;top:14px;width:2px;height:1px;background:#a01010"></i><span class="rl" style="left:651px;top:1px">24x</span><i style="position:absolute;left:652px;top:0;width:1px;height:2px;background:#a01010"></i><i style="position:absolute;left:657px;top:14px;width:2px;height:1px;background:#a01010"></i><span class="rl" style="left:674px;top:1px">12x</span><i style="position:absolute;left:675px;top:0;width:1px;height:2px;background:#a01010"></i><i style="position:absolute;left:680px;top:14px;width:2px;height:1px;background:#a01010"></i><span class="rl" style="left:743px;top:1px">50x</span><i style="position:absolute;left:744px;top:0;width:1px;height:2px;background:#a01010"></i><i style="position:absolute;left:749px;top:14px;width:2px;height:1px;background:#a01010"></i><span class="rl" style="left:760px;top:1px">2</span><i style="position:absolute;left:761px;top:0;width:1px;height:2px;background:#a01010"></i><i style="position:absolute;left:766px;top:14px;width:2px;height:1px;background:#a01010"></i><span class="rl" style="left:768px;top:1px">39x</span><i style="position:absolute;left:769px;top:0;width:1px;height:2px;background:#a01010"></i><i style="position:absolute;left:774px;top:14px;width:2px;height:1px;background:#a01010"></i><span class="rl" style="left:798px;top:1px">17x</span><i style="position:absolute;left:799px;top:0;width:1px;height:2px;background:#a01010"></i><i style="position:absolute;left:804px;top:14px;width:2px;height:1px;background:#a01010"></i><span class="rl" style="left:825px;top:1px">23x</span><i style="position:absolute;left:826px;top:0;width:1px;height:2px;background:#a01010"></i><i style="position:absolute;left:831px;top:14px;width:2px;height:1px;background:#a01010"></i><span class="rl" style="left:853px;top:1px">13x</span><i style="position:absolute;left:854px;top:0;width:1px;height:2px;background:#a01010"></i><i style="position:absolute;left:859px;top:14px;width:2px;height:1px;background:#a01010"></i></div>
<div class="a" style="left:52px;top:975px;width:1200px;height:17px;overflow:hidden"><span class="rl" style="left:58px;top:4px">18x</span><i style="position:absolute;left:60px;top:1px;width:1px;height:3px;background:#a01010"></i><i style="position:absolute;left:65px;top:16px;width:1px;height:1px;background:#a01010"></i><span class="rl" style="left:96px;top:4px">1x</span><i style="position:absolute;left:98px;top:1px;width:1px;height:3px;background:#a01010"></i><i style="position:absolute;left:103px;top:16px;width:1px;height:1px;background:#a01010"></i><span class="rl" style="left:110px;top:4px">7x</span><i style="position:absolute;left:112px;top:1px;width:1px;height:3px;background:#a01010"></i><i style="position:absolute;left:117px;top:16px;width:1px;height:1px;background:#a01010"></i><span class="rl" style="left:135px;top:4px">51x</span><i style="position:absolute;left:137px;top:1px;width:1px;height:3px;background:#a01010"></i><i style="position:absolute;left:142px;top:16px;width:1px;height:1px;background:#a01010"></i><span class="rl" style="left:150px;top:4px">50x</span><i style="position:absolute;left:152px;top:1px;width:1px;height:3px;background:#a01010"></i><i style="position:absolute;left:157px;top:16px;width:1px;height:1px;background:#a01010"></i><span class="rl" style="left:164px;top:4px">28x</span><i style="position:absolute;left:166px;top:1px;width:1px;height:3px;background:#a01010"></i><i style="position:absolute;left:171px;top:16px;width:1px;height:1px;background:#a01010"></i><span class="rl" style="left:180px;top:4px">39x</span><i style="position:absolute;left:182px;top:1px;width:1px;height:3px;background:#a01010"></i><i style="position:absolute;left:187px;top:16px;width:1px;height:1px;background:#a01010"></i><span class="rl" style="left:193px;top:4px">xx</span><i style="position:absolute;left:195px;top:1px;width:1px;height:3px;background:#a01010"></i><i style="position:absolute;left:200px;top:16px;width:1px;height:1px;background:#a01010"></i><span class="rl" style="left:207px;top:4px">44xx</span><i style="position:absolute;left:209px;top:1px;width:1px;height:3px;background:#a01010"></i><i style="position:absolute;left:214px;top:16px;width:1px;height:1px;background:#a01010"></i><span class="rl" style="left:236px;top:4px">23x</span><i style="position:absolute;left:238px;top:1px;width:1px;height:3px;background:#a01010"></i><i style="position:absolute;left:243px;top:16px;width:1px;height:1px;background:#a01010"></i><span class="rl" style="left:264px;top:4px">13x</span><i style="position:absolute;left:266px;top:1px;width:1px;height:3px;background:#a01010"></i><i style="position:absolute;left:271px;top:16px;width:1px;height:1px;background:#a01010"></i><span class="rl" style="left:319px;top:4px">3x</span><i style="position:absolute;left:321px;top:1px;width:1px;height:3px;background:#a01010"></i><i style="position:absolute;left:326px;top:16px;width:1px;height:1px;background:#a01010"></i><span class="rl" style="left:340px;top:4px">8x</span><i style="position:absolute;left:342px;top:1px;width:1px;height:3px;background:#a01010"></i><i style="position:absolute;left:347px;top:16px;width:1px;height:1px;background:#a01010"></i><span class="rl" style="left:366px;top:4px">21x</span><i style="position:absolute;left:368px;top:1px;width:1px;height:3px;background:#a01010"></i><i style="position:absolute;left:373px;top:16px;width:1px;height:1px;background:#a01010"></i><span class="rl" style="left:391px;top:4px">29x</span><i style="position:absolute;left:393px;top:1px;width:1px;height:3px;background:#a01010"></i><i style="position:absolute;left:398px;top:16px;width:1px;height:1px;background:#a01010"></i><span class="rl" style="left:405px;top:4px">49x</span><i style="position:absolute;left:407px;top:1px;width:1px;height:3px;background:#a01010"></i><i style="position:absolute;left:412px;top:16px;width:1px;height:1px;background:#a01010"></i><span class="rl" style="left:418px;top:4px">7x</span><i style="position:absolute;left:420px;top:1px;width:1px;height:3px;background:#a01010"></i><i style="position:absolute;left:425px;top:16px;width:1px;height:1px;background:#a01010"></i><span class="rl" style="left:428px;top:4px">40x</span><i style="position:absolute;left:430px;top:1px;width:1px;height:3px;background:#a01010"></i><i style="position:absolute;left:435px;top:16px;width:1px;height:1px;background:#a01010"></i><span class="rl" style="left:453px;top:4px">32x</span><i style="position:absolute;left:455px;top:1px;width:1px;height:3px;background:#a01010"></i><i style="position:absolute;left:460px;top:16px;width:1px;height:1px;background:#a01010"></i><span class="rl" style="left:477px;top:4px">24x</span><i style="position:absolute;left:479px;top:1px;width:1px;height:3px;background:#a01010"></i><i style="position:absolute;left:484px;top:16px;width:1px;height:1px;background:#a01010"></i><span class="rl" style="left:501px;top:4px">12x</span><i style="position:absolute;left:503px;top:1px;width:1px;height:3px;background:#a01010"></i><i style="position:absolute;left:508px;top:16px;width:1px;height:1px;background:#a01010"></i><span class="rl" style="left:522px;top:4px">4x</span><i style="position:absolute;left:524px;top:1px;width:1px;height:3px;background:#a01010"></i><i style="position:absolute;left:529px;top:16px;width:1px;height:1px;background:#a01010"></i><span class="rl" style="left:577px;top:4px">9x</span><i style="position:absolute;left:579px;top:1px;width:1px;height:3px;background:#a01010"></i><i style="position:absolute;left:584px;top:16px;width:1px;height:1px;background:#a01010"></i><span class="rl" style="left:604px;top:4px">22x</span><i style="position:absolute;left:606px;top:1px;width:1px;height:3px;background:#a01010"></i><i style="position:absolute;left:611px;top:16px;width:1px;height:1px;background:#a01010"></i><span class="rl" style="left:630px;top:4px">30x</span><i style="position:absolute;left:632px;top:1px;width:1px;height:3px;background:#a01010"></i><i style="position:absolute;left:637px;top:16px;width:1px;height:1px;background:#a01010"></i><span class="rl" style="left:656px;top:4px">41xx</span><i style="position:absolute;left:658px;top:1px;width:1px;height:3px;background:#a01010"></i><i style="position:absolute;left:663px;top:16px;width:1px;height:1px;background:#a01010"></i><span class="rl" style="left:680px;top:4px">3x</span><i style="position:absolute;left:682px;top:1px;width:1px;height:3px;background:#a01010"></i><i style="position:absolute;left:687px;top:16px;width:1px;height:1px;background:#a01010"></i><span class="rl" style="left:688px;top:4px">46x</span><i style="position:absolute;left:690px;top:1px;width:1px;height:3px;background:#a01010"></i><i style="position:absolute;left:695px;top:16px;width:1px;height:1px;background:#a01010"></i><span class="rl" style="left:705px;top:4px">25x</span><i style="position:absolute;left:707px;top:1px;width:1px;height:3px;background:#a01010"></i><i style="position:absolute;left:712px;top:16px;width:1px;height:1px;background:#a01010"></i><span class="rl" style="left:731px;top:4px">11x</span><i style="position:absolute;left:733px;top:1px;width:1px;height:3px;background:#a01010"></i><i style="position:absolute;left:738px;top:16px;width:1px;height:1px;background:#a01010"></i><span class="rl" style="left:759px;top:4px">2x</span><i style="position:absolute;left:761px;top:1px;width:1px;height:3px;background:#a01010"></i><i style="position:absolute;left:766px;top:16px;width:1px;height:1px;background:#a01010"></i><span class="rl" style="left:799px;top:4px">17x</span><i style="position:absolute;left:801px;top:1px;width:1px;height:3px;background:#a01010"></i><i style="position:absolute;left:806px;top:16px;width:1px;height:1px;background:#a01010"></i><span class="rl" style="left:838px;top:4px">16x</span><i style="position:absolute;left:840px;top:1px;width:1px;height:3px;background:#a01010"></i><i style="position:absolute;left:845px;top:16px;width:1px;height:1px;background:#a01010"></i><span class="rl" style="left:922px;top:4px">47x</span><i style="position:absolute;left:924px;top:1px;width:1px;height:3px;background:#a01010"></i><i style="position:absolute;left:929px;top:16px;width:1px;height:1px;background:#a01010"></i><span class="rl" style="left:945px;top:4px">12x</span><i style="position:absolute;left:947px;top:1px;width:1px;height:3px;background:#a01010"></i><i style="position:absolute;left:952px;top:16px;width:1px;height:1px;background:#a01010"></i><span class="rl" style="left:977px;top:4px">34x</span><i style="position:absolute;left:979px;top:1px;width:1px;height:3px;background:#a01010"></i><i style="position:absolute;left:984px;top:16px;width:1px;height:1px;background:#a01010"></i><span class="rl" style="left:1006px;top:4px">26x</span><i style="position:absolute;left:1008px;top:1px;width:1px;height:3px;background:#a01010"></i><i style="position:absolute;left:1013px;top:16px;width:1px;height:1px;background:#a01010"></i><span class="rl" style="left:1035px;top:4px">16x</span><i style="position:absolute;left:1037px;top:1px;width:1px;height:3px;background:#a01010"></i><i style="position:absolute;left:1042px;top:16px;width:1px;height:1px;background:#a01010"></i></div>
<div class="a" style="left:53px;top:108px;width:16px;height:867px;overflow:hidden"><span class="rl" style="left:1px;top:11px">9y-</span><i style="position:absolute;left:0;top:10px;width:2px;height:1px;background:#a01010"></i><span class="rl" style="left:1px;top:39px">22y</span><i style="position:absolute;left:0;top:38px;width:2px;height:1px;background:#a01010"></i><span class="rl" style="left:1px;top:60px">30y</span><i style="position:absolute;left:0;top:59px;width:2px;height:1px;background:#a01010"></i><span class="rl" style="left:1px;top:85px">38y</span><i style="position:absolute;left:0;top:84px;width:2px;height:1px;background:#a01010"></i><span class="rl" style="left:1px;top:110px">43y</span><i style="position:absolute;left:0;top:109px;width:2px;height:1px;background:#a01010"></i><span class="rl" style="left:1px;top:131px">41y</span><i style="position:absolute;left:0;top:130px;width:2px;height:1px;background:#a01010"></i><span class="rl" style="left:1px;top:156px">33y</span><i style="position:absolute;left:0;top:155px;width:2px;height:1px;background:#a01010"></i><span class="rl" style="left:1px;top:177px">25y</span><i style="position:absolute;left:0;top:176px;width:2px;height:1px;background:#a01010"></i><span class="rl" style="left:1px;top:210px">15y</span><i style="position:absolute;left:0;top:209px;width:2px;height:1px;background:#a01010"></i><span class="rl" style="left:1px;top:221px">47y</span><i style="position:absolute;left:0;top:220px;width:2px;height:1px;background:#a01010"></i><span class="rl" style="left:1px;top:236px">3y-</span><i style="position:absolute;left:0;top:235px;width:2px;height:1px;background:#a01010"></i><span class="rl" style="left:1px;top:257px">31y</span><i style="position:absolute;left:0;top:256px;width:2px;height:1px;background:#a01010"></i><span class="rl" style="left:1px;top:277px">39y</span><i style="position:absolute;left:0;top:276px;width:2px;height:1px;background:#a01010"></i><span class="rl" style="left:1px;top:309px">42y</span><i style="position:absolute;left:0;top:308px;width:2px;height:1px;background:#a01010"></i><span class="rl" style="left:1px;top:338px">6y</span><i style="position:absolute;left:0;top:337px;width:2px;height:1px;background:#a01010"></i><span class="rl" style="left:1px;top:331px">34y</span><i style="position:absolute;left:0;top:330px;width:2px;height:1px;background:#a01010"></i><span class="rl" style="left:1px;top:376px">16y</span><i style="position:absolute;left:0;top:375px;width:2px;height:1px;background:#a01010"></i><span class="rl" style="left:1px;top:392px">4y-</span><i style="position:absolute;left:0;top:391px;width:2px;height:1px;background:#a01010"></i><span class="rl" style="left:1px;top:407px">24y</span><i style="position:absolute;left:0;top:406px;width:2px;height:1px;background:#a01010"></i><span class="rl" style="left:1px;top:429px">32y</span><i style="position:absolute;left:0;top:428px;width:2px;height:1px;background:#a01010"></i><span class="rl" style="left:1px;top:454px">40y</span><i style="position:absolute;left:0;top:453px;width:2px;height:1px;background:#a01010"></i><span class="rl" style="left:1px;top:475px">46y</span><i style="position:absolute;left:0;top:474px;width:2px;height:1px;background:#a01010"></i><span class="rl" style="left:1px;top:501px">35y</span><i style="position:absolute;left:0;top:500px;width:2px;height:1px;background:#a01010"></i><span class="rl" style="left:1px;top:521px">27y</span><i style="position:absolute;left:0;top:520px;width:2px;height:1px;background:#a01010"></i><span class="rl" style="left:1px;top:544px">13y</span><i style="position:absolute;left:0;top:543px;width:2px;height:1px;background:#a01010"></i><span class="rl" style="left:1px;top:569px">12y</span><i style="position:absolute;left:0;top:568px;width:2px;height:1px;background:#a01010"></i><span class="rl" style="left:1px;top:687px">45y</span><i style="position:absolute;left:0;top:686px;width:2px;height:1px;background:#a01010"></i><span class="rl" style="left:1px;top:718px">36y</span><i style="position:absolute;left:0;top:717px;width:2px;height:1px;background:#a01010"></i><span class="rl" style="left:1px;top:743px">28y</span><i style="position:absolute;left:0;top:742px;width:2px;height:1px;background:#a01010"></i><span class="rl" style="left:1px;top:771px">20y</span><i style="position:absolute;left:0;top:770px;width:2px;height:1px;background:#a01010"></i><span class="rl" style="left:1px;top:800px">11y</span><i style="position:absolute;left:0;top:799px;width:2px;height:1px;background:#a01010"></i><span class="rl" style="left:1px;top:817px">48y</span><i style="position:absolute;left:0;top:816px;width:2px;height:1px;background:#a01010"></i><span class="rl" style="left:1px;top:76px;font-size:9px;border:1px solid #f0a0a0;border-right:none;line-height:9px;width:12px;letter-spacing:1px">A-</span></div>
<svg class="a" style="left:69px;top:108px" width="915" height="867" viewBox="69 108 915 867" shape-rendering="crispEdges"><defs><pattern id="ht" width="8" height="8" patternUnits="userSpaceOnUse"><rect width="8" height="8" fill="#2a91e2"/><g fill="#fff"><rect x="0" y="0" width="1" height="1"/><rect x="0" y="7" width="1" height="1"/><rect x="1" y="1" width="1" height="1"/><rect x="1" y="6" width="1" height="1"/><rect x="2" y="2" width="1" height="1"/><rect x="2" y="5" width="1" height="1"/><rect x="3" y="3" width="1" height="1"/><rect x="3" y="4" width="1" height="1"/><rect x="4" y="4" width="1" height="1"/><rect x="4" y="3" width="1" height="1"/><rect x="5" y="5" width="1" height="1"/><rect x="5" y="2" width="1" height="1"/><rect x="6" y="6" width="1" height="1"/><rect x="6" y="1" width="1" height="1"/><rect x="7" y="7" width="1" height="1"/><rect x="7" y="0" width="1" height="1"/></g></pattern><clipPath id="pc"><rect x="69" y="108" width="915" height="867"/></clipPath></defs><rect x="69" y="108" width="915" height="867" fill="#003366"/><g stroke="#053a70" stroke-width="1"><path d="M151.5 619V975M814 190.5H984"/></g><rect x="156" y="195" width="654" height="420" fill="#15629c"/><g stroke="#4698da" stroke-width="1" stroke-dasharray="2 3" fill="none" shape-rendering="auto"><path d="M158 198L254 405L158 612M349 240L258 405L349 565M602 240L692 405L602 565M808 198L692 405L808 612M377 200L475 230L574 200M377 610L475 585L574 610"/></g><g fill="#c4c4c4" stroke="#000" stroke-width="1"><rect x="349.5" y="195.5" width="26" height="420"/><rect x="574.5" y="195.5" width="26" height="420"/><path d="M130.5 169.5H835.5V640.5H130.5ZM156.5 195.5V615.5H809.5V195.5Z" fill-rule="evenodd"/></g><g fill="#f96015" stroke="#000" stroke-width="1"><rect x="130.5" y="169.5" width="34.0" height="34.0"/><rect x="130.5" y="606.5" width="34.0" height="34.0"/><rect x="337.5" y="169.5" width="49.0" height="34.0"/><rect x="337.5" y="606.5" width="49.0" height="34.0"/><rect x="563.5" y="169.5" width="49.0" height="34.0"/><rect x="563.5" y="606.5" width="49.0" height="34.0"/><rect x="802.5" y="169.5" width="33.0" height="34.0"/><rect x="802.5" y="606.5" width="33.0" height="34.0"/></g><g stroke="#8c1414" stroke-width="1" fill="none" stroke-dasharray="9 6 3 6"><path d="M151.5 190.5H814.5M151.5 619.5H814.5M151.5 190.5V619.5M814.5 190.5V619.5M373.5 190.5V619.5M576.5 190.5V619.5"/></g><g shape-rendering="auto"><text x="250.8" y="166" font-family="Liberation Sans,sans-serif" font-size="14.2" fill="#fff" opacity="1" textLength="20.6" lengthAdjust="spacingAndGlyphs">K101</text><text x="463.6" y="166" font-family="Liberation Sans,sans-serif" font-size="14.2" fill="#fff" opacity="1" textLength="24" lengthAdjust="spacingAndGlyphs">K102</text><text x="683.4" y="166" font-family="Liberation Sans,sans-serif" font-size="14.2" fill="#fff" opacity="1" textLength="22.6" lengthAdjust="spacingAndGlyphs">K103</text><text x="250.6" y="611" font-family="Liberation Sans,sans-serif" font-size="14.2" fill="#fff" opacity="1" textLength="24" lengthAdjust="spacingAndGlyphs">K106</text><text x="463.6" y="611" font-family="Liberation Sans,sans-serif" font-size="14.2" fill="#fff" opacity="1" textLength="23.4" lengthAdjust="spacingAndGlyphs">K107</text><text x="683.8" y="611" font-family="Liberation Sans,sans-serif" font-size="14.2" fill="#fff" opacity="1" textLength="23.4" lengthAdjust="spacingAndGlyphs">K108</text><text x="167.8" y="210" font-family="Liberation Sans,sans-serif" font-size="14.2" fill="#fff" opacity="1" textLength="21.6" lengthAdjust="spacingAndGlyphs">S101</text><text x="389.6" y="210" font-family="Liberation Sans,sans-serif" font-size="14.2" fill="#fff" opacity="1" textLength="24.6" lengthAdjust="spacingAndGlyphs">S102</text><text x="616.8" y="210" font-family="Liberation Sans,sans-serif" font-size="14.2" fill="#fff" opacity="1" textLength="23.4" lengthAdjust="spacingAndGlyphs">S103</text><text x="839.2" y="210" font-family="Liberation Sans,sans-serif" font-size="14.2" fill="#fff" opacity="1" textLength="23.9" lengthAdjust="spacingAndGlyphs">S104</text><text x="168" y="647" font-family="Liberation Sans,sans-serif" font-size="14.2" fill="#fff" opacity="1" textLength="24" lengthAdjust="spacingAndGlyphs">S105</text><text x="390" y="647" font-family="Liberation Sans,sans-serif" font-size="14.2" fill="#fff" opacity="1" textLength="24.2" lengthAdjust="spacingAndGlyphs">S106</text><text x="617" y="647" font-family="Liberation Sans,sans-serif" font-size="14.2" fill="#fff" opacity="1" textLength="23.4" lengthAdjust="spacingAndGlyphs">S107</text><text x="839.2" y="647" font-family="Liberation Sans,sans-serif" font-size="14.2" fill="#fff" opacity="1" textLength="23.9" lengthAdjust="spacingAndGlyphs">S108</text><text x="129" y="416" font-family="Liberation Sans,sans-serif" font-size="14.2" fill="#fff" opacity="1" textLength="25" lengthAdjust="spacingAndGlyphs" transform="rotate(-90 129 416)">K109</text><text x="808" y="416" font-family="Liberation Sans,sans-serif" font-size="14.2" fill="#fff" opacity="1" textLength="25" lengthAdjust="spacingAndGlyphs" transform="rotate(-90 808 416)">K112</text><text x="348" y="574" font-family="Liberation Sans,sans-serif" font-size="14.2" fill="#fff" opacity="1" textLength="26" lengthAdjust="spacingAndGlyphs" transform="rotate(-90 348 574)">K110</text><text x="252.6" y="407" font-family="Liberation Sans,sans-serif" font-size="14.2" fill="#fff" opacity="1" textLength="21.8" lengthAdjust="spacingAndGlyphs">D101</text><text x="685.2" y="407" font-family="Liberation Sans,sans-serif" font-size="14.2" fill="#fff" opacity="1" textLength="24.2" lengthAdjust="spacingAndGlyphs">D103</text><path d="M248.5 396V410.5H270M681.5 396V410.5H703" fill="none" stroke="#a8ecff" stroke-width="1"/></g><g fill="url(#ht)" stroke="#000" stroke-width="1"><path d="M400.5 222.9L475.5 208.0L480.7 234.4L405.7 249.3Z"/><path d="M336.9 265.4L400.5 222.9L415.4 245.3L351.8 287.8Z"/><path d="M294.4 329.0L336.9 265.4L359.3 280.3L316.8 343.9Z"/><path d="M279.5 404.0L294.4 329.0L320.8 334.2L305.9 409.2Z"/><path d="M294.4 479.0L279.5 404.0L305.9 398.8L320.8 473.8Z"/><path d="M336.9 542.6L294.4 479.0L316.8 464.1L359.3 527.7Z"/><path d="M400.5 585.1L336.9 542.6L351.8 520.2L415.4 562.7Z"/><path d="M475.5 600.0L400.5 585.1L405.7 558.7L480.7 573.6Z"/><path d="M550.5 585.1L475.5 600.0L470.3 573.6L545.3 558.7Z"/><path d="M614.1 542.6L550.5 585.1L535.6 562.7L599.2 520.2Z"/><path d="M656.6 479.0L614.1 542.6L591.7 527.7L634.2 464.1Z"/><path d="M671.5 404.0L656.6 479.0L630.2 473.8L645.1 398.8Z"/><path d="M656.6 329.0L671.5 404.0L645.1 409.2L630.2 334.2Z"/><path d="M614.1 265.4L656.6 329.0L634.2 343.9L591.7 280.3Z"/><path d="M550.5 222.9L614.1 265.4L599.2 287.8L535.6 245.3Z"/><path d="M475.5 208.0L550.5 222.9L545.3 249.3L470.3 234.4Z"/><path d="M411.0 248.2L475.5 235.4L481.0 263.3L416.5 276.1Z"/><path d="M356.3 284.8L411.0 248.2L426.8 271.9L372.1 308.4Z"/><path d="M319.7 339.5L356.3 284.8L379.9 300.6L343.4 355.3Z"/><path d="M306.9 404.0L319.7 339.5L347.6 345.0L334.8 409.5Z"/><path d="M319.7 468.5L306.9 404.0L334.8 398.5L347.6 463.0Z"/><path d="M356.3 523.2L319.7 468.5L343.4 452.7L379.9 507.4Z"/><path d="M411.0 559.8L356.3 523.2L372.1 499.6L426.8 536.1Z"/><path d="M475.5 572.6L411.0 559.8L416.5 531.9L481.0 544.7Z"/><path d="M540.0 559.8L475.5 572.6L470.0 544.7L534.5 531.9Z"/><path d="M594.7 523.2L540.0 559.8L524.2 536.1L578.9 499.6Z"/><path d="M631.3 468.5L594.7 523.2L571.1 507.4L607.6 452.7Z"/><path d="M644.1 404.0L631.3 468.5L603.4 463.0L616.2 398.5Z"/><path d="M631.3 339.5L644.1 404.0L616.2 409.5L603.4 345.0Z"/><path d="M594.7 284.8L631.3 339.5L607.6 355.3L571.1 300.6Z"/><path d="M540.0 248.2L594.7 284.8L578.9 308.4L524.2 271.9Z"/><path d="M475.5 235.4L540.0 248.2L534.5 276.1L470.0 263.3Z"/><path d="M422.1 275.0L475.5 264.4L478.8 281.1L425.4 291.8Z"/><path d="M376.8 305.3L422.1 275.0L431.6 289.2L386.3 319.5Z"/><path d="M346.5 350.6L376.8 305.3L391.0 314.8L360.7 360.1Z"/><path d="M335.9 404.0L346.5 350.6L363.3 353.9L352.6 407.3Z"/><path d="M346.5 457.4L335.9 404.0L352.6 400.7L363.3 454.1Z"/><path d="M376.8 502.7L346.5 457.4L360.7 447.9L391.0 493.2Z"/><path d="M422.1 533.0L376.8 502.7L386.3 488.5L431.6 518.8Z"/><path d="M475.5 543.6L422.1 533.0L425.4 516.2L478.8 526.9Z"/><path d="M528.9 533.0L475.5 543.6L472.2 526.9L525.6 516.2Z"/><path d="M574.2 502.7L528.9 533.0L519.4 518.8L564.7 488.5Z"/><path d="M604.5 457.4L574.2 502.7L560.0 493.2L590.3 447.9Z"/><path d="M615.1 404.0L604.5 457.4L587.7 454.1L598.4 400.7Z"/><path d="M604.5 350.6L615.1 404.0L598.4 407.3L587.7 353.9Z"/><path d="M574.2 305.3L604.5 350.6L590.3 360.1L560.0 314.8Z"/><path d="M528.9 275.0L574.2 305.3L564.7 319.5L519.4 289.2Z"/><path d="M475.5 264.4L528.9 275.0L525.6 291.8L472.2 281.1Z"/><path d="M428.7 291.1L475.5 281.8L479.9 304.1L433.2 313.4Z"/><path d="M389.1 317.6L428.7 291.1L441.4 310.0L401.7 336.5Z"/><path d="M362.6 357.2L389.1 317.6L408.0 330.2L381.5 369.9Z"/><path d="M353.3 404.0L362.6 357.2L384.9 361.7L375.6 408.4Z"/><path d="M362.6 450.8L353.3 404.0L375.6 399.6L384.9 446.3Z"/><path d="M389.1 490.4L362.6 450.8L381.5 438.1L408.0 477.8Z"/><path d="M428.7 516.9L389.1 490.4L401.7 471.5L441.4 498.0Z"/><path d="M475.5 526.2L428.7 516.9L433.2 494.6L479.9 503.9Z"/><path d="M522.3 516.9L475.5 526.2L471.1 503.9L517.8 494.6Z"/><path d="M561.9 490.4L522.3 516.9L509.6 498.0L549.3 471.5Z"/><path d="M588.4 450.8L561.9 490.4L543.0 477.8L569.5 438.1Z"/><path d="M597.7 404.0L588.4 450.8L566.1 446.3L575.4 399.6Z"/><path d="M588.4 357.2L597.7 404.0L575.4 408.4L566.1 361.7Z"/><path d="M561.9 317.6L588.4 357.2L569.5 369.9L543.0 330.2Z"/><path d="M522.3 291.1L561.9 317.6L549.3 336.5L509.6 310.0Z"/><path d="M475.5 281.8L522.3 291.1L517.8 313.4L471.1 304.1Z"/><path d="M437.6 312.5L475.5 305.0L480.5 330.2L442.6 337.7Z"/><path d="M405.5 334.0L437.6 312.5L451.9 333.9L419.8 355.4Z"/><path d="M384.0 366.1L405.5 334.0L426.9 348.3L405.4 380.4Z"/><path d="M376.5 404.0L384.0 366.1L409.2 371.1L401.7 409.0Z"/><path d="M384.0 441.9L376.5 404.0L401.7 399.0L409.2 436.9Z"/><path d="M405.5 474.0L384.0 441.9L405.4 427.6L426.9 459.7Z"/><path d="M437.6 495.5L405.5 474.0L419.8 452.6L451.9 474.1Z"/><path d="M475.5 503.0L437.6 495.5L442.6 470.3L480.5 477.8Z"/><path d="M513.4 495.5L475.5 503.0L470.5 477.8L508.4 470.3Z"/><path d="M545.5 474.0L513.4 495.5L499.1 474.1L531.2 452.6Z"/><path d="M567.0 441.9L545.5 474.0L524.1 459.7L545.6 427.6Z"/><path d="M574.5 404.0L567.0 441.9L541.8 436.9L549.3 399.0Z"/><path d="M567.0 366.1L574.5 404.0L549.3 409.0L541.8 371.1Z"/><path d="M545.5 334.0L567.0 366.1L545.6 380.4L524.1 348.3Z"/><path d="M513.4 312.5L545.5 334.0L531.2 355.4L499.1 333.9Z"/><path d="M475.5 305.0L513.4 312.5L508.4 337.7L470.5 330.2Z"/></g><rect x="422" y="329" width="107" height="8" fill="url(#ht)"/><rect x="409.5" y="335.5" width="132" height="26" fill="url(#ht)"/><path d="M409.5 335.5H541.5" stroke="#000" stroke-width="1"/><path d="M419.9 362.0L532.1 362.0L543.9 378.9L549.5 407.0L543.9 435.1L528.0 459.0L504.1 474.9L476.0 480.5L447.9 474.9L424.0 459.0L408.1 435.1L402.5 407.0L408.1 378.9Z" fill="#003366" stroke="#000" stroke-width="1"/><path d="M420 361.5H530" stroke="#fff" stroke-width="1"/><g stroke="#8c1414" stroke-width="1" fill="none" stroke-dasharray="9 6 3 6"><path d="M373.5 350.5H576.5M373.5 506.5H576.5M373.5 240V570M576.5 240V570"/></g><g shape-rendering="auto"><text x="464" y="275" font-family="Liberation Sans,sans-serif" font-size="14.2" fill="#fff" opacity="0.8" textLength="23" lengthAdjust="spacingAndGlyphs">D102</text><text x="464" y="567" font-family="Liberation Sans,sans-serif" font-size="14.2" fill="#fff" opacity="0.8" textLength="24" lengthAdjust="spacingAndGlyphs">D104</text><text x="464" y="323" font-family="Liberation Sans,sans-serif" font-size="14.2" fill="#fff" opacity="0.75" textLength="23" lengthAdjust="spacingAndGlyphs">K104</text><text x="464" y="500" font-family="Liberation Sans,sans-serif" font-size="14.2" fill="#fff" opacity="0.75" textLength="24" lengthAdjust="spacingAndGlyphs">K105</text><text x="348" y="276" font-family="Liberation Sans,sans-serif" font-size="14.2" fill="#fff" opacity="0.75" textLength="26" lengthAdjust="spacingAndGlyphs" transform="rotate(-90 348 276)">K110</text><text x="348" y="445" font-family="Liberation Sans,sans-serif" font-size="14.2" fill="#fff" opacity="0.75" textLength="26" lengthAdjust="spacingAndGlyphs" transform="rotate(-90 348 445)">K110</text><text x="573" y="280" font-family="Liberation Sans,sans-serif" font-size="14.2" fill="#fff" opacity="0.75" textLength="26" lengthAdjust="spacingAndGlyphs" transform="rotate(-90 573 280)">K111</text><text x="573" y="445" font-family="Liberation Sans,sans-serif" font-size="14.2" fill="#fff" opacity="0.75" textLength="26" lengthAdjust="spacingAndGlyphs" transform="rotate(-90 573 445)">K111</text><text x="573" y="574" font-family="Liberation Sans,sans-serif" font-size="14.2" fill="#fff" opacity="0.75" textLength="26" lengthAdjust="spacingAndGlyphs" transform="rotate(-90 573 574)">K111</text><path d="M460.5 264V278.5H482M460.5 556V570.5H482" fill="none" stroke="#a8ecff" stroke-width="1" opacity=".7"/></g></svg>
<div class="a" style="left:983px;top:92px;width:882px;height:896px;background:#fff;border:1px solid #7c7c7c;box-sizing:border-box;box-shadow:3px 4px 9px rgba(0,0,0,.38)"></div>
<div class="a" style="left:983px;top:90px;width:882px;height:2px;background:linear-gradient(#686868 50%,#d2d2d2 50%)"></div>
<div class="a" style="left:984px;top:100px;width:881px;height:28px;background:linear-gradient(#b9ccd4 0%,#c9dce4 30%,#dcecf4 70%,#e4f4fc 100%);border-bottom:1px solid #222;box-sizing:border-box"></div>
<div class="a" style="left:984px;top:100px;width:73px;height:28px;background:linear-gradient(#5f9ad8 0%,#4a86c8 35%,#2c62a8 75%,#2a5c9e 100%);box-shadow:inset 1px 1px 0 #7ab0e4,inset -1px -1px 0 #1c4888;color:#fff;font-weight:bold;font-size:11px;line-height:29px;text-align:center;letter-spacing:.5px;text-shadow:1px 1px 1px #123">STA4-CAD</div>
<div class="a" style="left:1067px;top:100px;height:28px;line-height:29px;color:#0c0c6c;font-weight:bold;font-size:12px;letter-spacing:.4px;white-space:nowrap">3D VIEW</div>
<div class="a" style="left:984px;top:128px;width:881px;height:31px;background:#f0f0f0"></div>
<div class="a" style="left:984px;top:159px;width:881px;height:2px;background:#fafafa;border-top:1px solid #8c8c8c;box-sizing:border-box"></div>
<div class="a" style="left:984px;top:160px;width:2px;height:826px;background:linear-gradient(90deg,#7e7e7e,#a4a4a4)"></div>
<div class="a" style="left:1814px;top:104px;width:25px;height:19px;background:linear-gradient(#9fb4c0,#c9d9e0 45%,#a9bfca 50%,#d3e2e8);border:1px solid #3c4c58;box-sizing:border-box"></div>
<div class="a" style="left:1820px;top:108px;width:14px;height:11px;border:1px solid #444;background:#e8f0f4;box-shadow:inset 0 0 0 1px #fff,inset 0 0 0 2px #666;box-sizing:border-box"></div>
<div class="a" style="left:1839px;top:104px;width:23px;height:19px;background:linear-gradient(#dc9484,#c8543c 45%,#b6341e 50%,#d07864);border:1px solid #4c241c;box-sizing:border-box;color:#fff;font-weight:bold;font-size:14px;line-height:15px;text-align:center;text-shadow:0 0 1px #000,0 0 1px #000">x</div>
<div class="a" style="left:1781px;top:140px;width:81px;height:11px;background:linear-gradient(90deg,#2a2a2a,#6e6e6e 35%,#c4c4c4 70%,#f0f0f0);border:1px solid #bcbcbc;box-sizing:border-box"></div>
<div class="a" style="left:1828px;top:142px;width:9px;height:9px;border-radius:5px;background:#3ef0f0;border:1px solid #2a9c9c;box-sizing:border-box"></div>
<svg class="a" style="left:986px;top:161px;overflow:hidden" width="876" height="824" viewBox="986 161 876 824"><rect x="986" y="161" width="876" height="824" fill="#caf0fd"/><path d="M986 168.9H1862M986 176.6H1862M986 184.5H1862M986 192.7H1862M986 209.9H1862M986 218.9H1862M986 228.2H1862M986 237.9H1862M986 258.2H1862M986 268.9H1862M986 280.0H1862M986 291.5H1862M986 315.9H1862M986 328.8H1862M986 342.3H1862M986 356.3H1862M986 386.1H1862M986 402.0H1862M986 418.7H1862M986 436.1H1862M986 473.4H1862M986 493.4H1862M986 514.5H1862M986 536.7H1862M986 584.7H1862M986 610.7H1862M986 638.3H1862M986 667.5H1862M986 731.6H1862M986 766.8H1862M986 804.4H1862M986 844.7H1862M986 934.5H1862M986 984.7H1862M1012.8 161L328.4 985M1034.4 161L385.9 985M1055.9 161L443.4 985M1077.5 161L500.9 985M1120.6 161L615.9 985M1142.2 161L673.4 985M1163.8 161L730.9 985M1185.3 161L788.4 985M1228.5 161L903.4 985M1250.0 161L960.9 985M1271.6 161L1018.4 985M1293.2 161L1075.9 985M1336.3 161L1190.9 985M1357.9 161L1248.4 985M1379.5 161L1305.9 985M1401.0 161L1363.4 985M1444.2 161L1478.4 985M1465.7 161L1535.9 985M1487.3 161L1593.4 985M1508.9 161L1650.9 985M1552.0 161L1765.9 985M1573.6 161L1823.4 985M1595.1 161L1880.9 985M1616.7 161L1938.4 985M1659.8 161L2053.4 985M1681.4 161L2110.9 985M1703.0 161L2168.4 985M1724.5 161L2225.9 985M1767.7 161L2340.9 985M1789.2 161L2398.4 985M1810.8 161L2455.9 985M1832.4 161L2513.4 985" stroke="#def7ff" stroke-width="1" fill="none"/><path d="M986 161.4H1862M986 201.2H1862M986 247.9H1862M986 303.5H1862M986 370.9H1862M986 454.3H1862M986 560.0H1862M986 698.6H1862M986 887.9H1862M991.2 161L270.9 985M1099.1 161L558.4 985M1206.9 161L845.9 985M1314.7 161L1133.4 985M1422.6 161L1420.9 985M1530.4 161L1708.4 985M1638.3 161L1995.9 985M1746.1 161L2283.4 985M1853.9 161L2570.9 985" stroke="#effdff" stroke-width="1.25" fill="none"/><polygon points="1183.8,809.1 1657.2,809.1 1615.1,605.0 1225.9,605.0" fill="#fbfffe" /><polygon points="1186.5,822.9 1654.5,822.9 1657.2,809.1 1183.8,809.1" fill="#ddeedd" /><polygon points="1218.5,803.7 1221.3,787.5 1190.6,601.4 1186.8,616.9" fill="#8a340a" /><polygon points="1359.1,803.7 1359.9,787.5 1350.6,601.4 1349.4,616.9" fill="#8a340a" /><polygon points="1471.5,803.7 1470.8,787.5 1478.6,601.4 1479.5,616.9" fill="#8a340a" /><polygon points="1622.5,803.7 1619.7,787.5 1650.4,601.4 1654.2,616.9" fill="#8a340a" /><polygon points="1167.4,642.6 1673.6,642.6 1678.4,616.9 1162.6,616.9" fill="#9a9075" /><polygon points="1197.6,803.7 1218.5,803.7 1186.8,616.9 1162.6,616.9" fill="#9f3e10" /><polygon points="1328.4,803.7 1359.1,803.7 1349.4,616.9 1313.9,616.9" fill="#9f3e10" /><polygon points="1471.5,803.7 1502.5,803.7 1515.3,616.9 1479.5,616.9" fill="#9f3e10" /><polygon points="1622.5,803.7 1643.4,803.7 1678.4,616.9 1654.2,616.9" fill="#9f3e10" /><polygon points="1211.9,434.6 1629.1,434.6 1678.4,616.9 1162.6,616.9" fill="#dccca8" /><polygon points="1224.7,442.5 1616.3,442.5 1657.1,605.1 1183.9,605.1" fill="#1a70a6" /><polygon points="1340.9,442.5 1355.8,442.5 1342.4,605.1 1324.3,605.1" fill="#dccca8" /><polygon points="1475.6,442.5 1490.5,442.5 1505.2,605.1 1487.1,605.1" fill="#dccca8" /><polygon points="1211.9,434.6 1231.5,434.6 1228.9,445.1 1209.1,445.1" fill="#ff6519" /><polygon points="1166.8,601.4 1190.6,601.4 1186.8,616.9 1162.6,616.9" fill="#ff6519" /><polygon points="1334.3,434.6 1363.0,434.6 1362.2,445.1 1333.1,445.1" fill="#ff6519" /><polygon points="1315.6,601.4 1350.6,601.4 1349.4,616.9 1313.9,616.9" fill="#ff6519" /><polygon points="1468.3,434.6 1497.2,434.6 1498.2,445.1 1468.9,445.1" fill="#ff6519" /><polygon points="1478.6,601.4 1513.8,601.4 1515.3,616.9 1479.5,616.9" fill="#ff6519" /><polygon points="1609.5,434.6 1629.1,434.6 1631.9,445.1 1612.1,445.1" fill="#ff6519" /><polygon points="1650.4,601.4 1674.2,601.4 1678.4,616.9 1654.2,616.9" fill="#ff6519" /><polygon points="1287.2,515.7 1301.0,487.9 1292.2,376.7 1277.0,402.6" fill="#728268" stroke="#728268" stroke-width=".6"/><polygon points="1530.5,487.9 1543.9,515.7 1553.4,402.6 1538.6,376.7" fill="#9cb094" stroke="#9cb094" stroke-width=".6"/><polygon points="1292.7,545.5 1287.2,515.7 1277.0,402.6 1282.5,430.4" fill="#728268" stroke="#728268" stroke-width=".6"/><polygon points="1543.9,515.7 1538.1,545.5 1547.5,430.4 1553.4,402.6" fill="#9cb094" stroke="#9cb094" stroke-width=".6"/><polygon points="1318.5,572.4 1292.7,545.5 1282.5,430.4 1310.1,455.8" fill="#76866c" stroke="#76866c" stroke-width=".6"/><polygon points="1538.1,545.5 1512.1,572.4 1519.6,455.8 1547.5,430.4" fill="#a6ba9e" stroke="#a6ba9e" stroke-width=".6"/><polygon points="1361.7,591.3 1318.5,572.4 1310.1,455.8 1356.7,473.6" fill="#879a80" stroke="#879a80" stroke-width=".6"/><polygon points="1512.1,572.4 1468.6,591.3 1472.7,473.6 1519.6,455.8" fill="#b4c8ac" stroke="#b4c8ac" stroke-width=".6"/><polygon points="1415.1,598.1 1361.7,591.3 1356.7,473.6 1414.7,480.1" fill="#98aa90" stroke="#98aa90" stroke-width=".6"/><polygon points="1468.6,591.3 1415.1,598.1 1414.7,480.1 1472.7,473.6" fill="#a8bca0" stroke="#a8bca0" stroke-width=".6"/><polygon points="1415.7,338.5 1464.3,343.0 1507.1,356.1 1538.6,376.7 1553.4,402.6 1547.5,430.4 1519.6,455.8 1472.7,473.6 1414.7,480.1 1356.7,473.6 1310.1,455.8 1282.5,430.4 1277.0,402.6 1292.2,376.7 1324.0,356.1 1367.0,343.0" fill="#e1fcd9" /><polygon points="1415.6,346.8 1457.9,350.7 1495.0,362.2 1521.9,380.2 1534.1,402.6 1528.4,426.4 1504.1,447.9 1464.0,462.9 1414.7,468.3 1365.6,462.9 1325.7,447.9 1301.7,426.4 1296.4,402.6 1308.9,380.2 1336.0,362.2 1373.3,350.7" fill="none" stroke="#9cac98" stroke-width=".8" stroke-dasharray="3.5 2.5"/><polygon points="1415.5,355.8 1451.0,359.1 1481.9,368.9 1504.0,383.9 1513.6,402.6 1508.4,422.2 1488.0,439.7 1455.0,451.8 1414.8,456.2 1374.7,451.8 1341.9,439.7 1321.7,422.2 1316.8,402.6 1326.7,383.9 1349.0,368.9 1380.1,359.1" fill="none" stroke="#9cac98" stroke-width=".8" stroke-dasharray="3.5 2.5"/><polygon points="1415.5,361.3 1446.7,364.3 1473.9,372.9 1493.2,386.2 1501.4,402.6 1496.5,419.7 1478.6,434.9 1449.8,445.3 1414.9,449.1 1380.0,445.3 1351.4,434.9 1333.7,419.7 1329.1,402.6 1337.5,386.2 1357.0,372.9 1384.2,364.3" fill="none" stroke="#9cac98" stroke-width=".8" stroke-dasharray="3.5 2.5"/><polygon points="1415.5,368.8 1441.0,371.2 1463.1,378.3 1478.6,389.3 1485.0,402.6 1480.8,416.4 1466.1,428.5 1442.9,436.8 1414.9,439.8 1387.0,436.8 1363.9,428.5 1349.4,416.4 1345.4,402.6 1352.0,389.3 1367.7,378.3 1389.9,371.2" fill="none" stroke="#9cac98" stroke-width=".8" stroke-dasharray="3.5 2.5"/><polyline points="1325.7,447.9 1301.7,426.4 1296.4,402.6 1308.9,380.2 1336.0,362.2 1373.3,350.7 1415.6,346.8 1457.9,350.7 1495.0,362.2 1521.9,380.2" fill="none" stroke="#6e7e6a" stroke-width="1.1"/><polyline points="1341.9,439.7 1321.7,422.2 1316.8,402.6 1326.7,383.9" fill="none" stroke="#7c8c78" stroke-width="1"/><path d="M1370.3 378.8L1460.4 378.8" stroke="#8a9a86" stroke-width=".9" fill="none"/><path d="M1415.7 338.5L1415.4 377.3M1464.3 343.0L1434.5 379.2M1507.1 356.1L1450.8 384.6M1538.6 376.7L1462.2 392.7M1553.4 402.6L1466.7 402.6M1547.5 430.4L1463.3 412.7M1519.6 455.8L1452.4 421.5M1472.7 473.6L1435.4 427.5M1414.7 480.1L1415.0 429.7M1356.7 473.6L1394.7 427.5M1310.1 455.8L1377.8 421.5M1282.5 430.4L1366.9 412.7M1277.0 402.6L1363.7 402.6M1292.2 376.7L1368.4 392.7M1324.0 356.1L1379.8 384.6M1367.0 343.0L1396.3 379.2" fill="none" stroke="#a8b8a4" stroke-width=".7" stroke-dasharray="3 3" opacity=".8"/><clipPath id="hc"><polygon points="1375.5,387.8 1455.8,387.8 1462.9,393.7 1467.4,403.7 1464.1,413.9 1453.1,422.8 1435.9,428.9 1415.4,431.0 1394.9,428.9 1377.8,422.8 1366.9,413.9 1363.7,403.7 1368.3,393.7"/></clipPath><g clip-path="url(#hc)"><polygon points="1375.5,387.8 1455.8,387.8 1462.9,393.7 1467.4,403.7 1464.1,413.9 1453.1,422.8 1435.9,428.9 1415.4,431.0 1394.9,428.9 1377.8,422.8 1366.9,413.9 1363.7,403.7 1368.3,393.7" fill="#a2b29a"/><polygon points="1375.5,387.8 1455.8,387.8 1453.4,499.9 1378.6,499.9" fill="#a2b29a" stroke="#a2b29a" stroke-width=".6"/><polygon points="1455.8,387.8 1462.9,393.7 1459.9,506.2 1453.4,499.9" fill="#7a8a72" stroke="#7a8a72" stroke-width=".6"/><polygon points="1462.9,393.7 1467.4,403.7 1464.1,516.9 1459.9,506.2" fill="#7a8a72" stroke="#7a8a72" stroke-width=".6"/><polygon points="1363.7,403.7 1368.3,393.7 1372.0,506.2 1367.7,516.9" fill="#9cac94" stroke="#9cac94" stroke-width=".6"/><polygon points="1368.3,393.7 1375.5,387.8 1378.6,499.9 1372.0,506.2" fill="#9cac94" stroke="#9cac94" stroke-width=".6"/></g></svg>
<div class="a" style="left:985px;top:132px;width:26px;height:26px;border:1px solid;border-color:#fff #7c7c7c #7c7c7c #fff;box-sizing:border-box"></div>
<div class="a" style="left:1036px;top:132px;width:27px;height:26px;border:1px solid;border-color:#fff #7c7c7c #7c7c7c #fff;box-sizing:border-box"></div>
<div class="a" style="left:1248px;top:132px;width:26px;height:26px;border:1px solid;border-color:#fff #7c7c7c #7c7c7c #fff;box-sizing:border-box"></div>
<div class="a" style="left:1274px;top:132px;width:24px;height:26px;border:1px solid;border-color:#fff #7c7c7c #7c7c7c #fff;box-sizing:border-box"></div>
<div class="a" style="left:1298px;top:132px;width:26px;height:26px;border:1px solid;border-color:#fff #7c7c7c #7c7c7c #fff;box-sizing:border-box"></div>
<svg class="a" style="left:986px;top:133px" width="24" height="24" viewBox="0 0 24 24"><path d="M12.2 22.5V5M17 22.5V5M21.8 22.5V5" stroke="#0c1c94" stroke-width="2.4"/><path d="M12.2 6H21.8M12.2 11.5H21.8M12.2 17H21.8" stroke="#0c1c94" stroke-width="2"/><text x="0" y="10" font-family="Liberation Mono,monospace" font-size="10" font-weight="bold" fill="#a01010" textLength="5.5" lengthAdjust="spacingAndGlyphs">A</text><text x="5.6" y="8" font-family="Liberation Mono,monospace" font-size="7" font-weight="bold" fill="#a01010" textLength="6.2" lengthAdjust="spacingAndGlyphs">LL</text></svg>
<svg class="a" style="left:1013px;top:134px" width="18" height="21" viewBox="0 0 18 21"><path d="M1 4L3.5 7L8.5 .8" fill="none" stroke="#d01010" stroke-width="1.6"/><rect x="12" y="5" width="1.8" height="5" fill="#a01010"/><path d="M3.5 13V19.5H14.5V13L9 7.5Z" fill="#fff" stroke="#000" stroke-width="1"/><path d="M1 14L9 6L17 14" fill="none" stroke="#c88010" stroke-width="2.2"/><rect x="7.2" y="14" width="3.6" height="5.5" fill="#f0b020" stroke="#906000" stroke-width=".7"/></svg>
<svg class="a" style="left:1038px;top:133px" width="24" height="23" viewBox="0 0 24 23"><path d="M2 21V1H9V21M2 6H9M2 11H9" fill="none" stroke="#0c1c94" stroke-width="1.2"/><path d="M1 21H10" stroke="#555" stroke-width="1"/><text x="10.5" y="14" font-family="Liberation Sans,sans-serif" font-size="17" font-weight="bold" fill="#8c0808">?</text><circle cx="8.5" cy="14" r="4" fill="#d8f0ff" stroke="#98c4ec" stroke-width="1.2" opacity=".95"/><path d="M11.5 17.5L15.5 21.5" stroke="#1c3cc8" stroke-width="2.4"/></svg>
<div class="a" style="left:1065px;top:133px;width:164px;height:23px;background:#fdf9f0;border:1px solid;border-color:#a0a0a0 #fff #fff #a0a0a0;box-sizing:border-box"></div>
<svg class="a" style="left:1067px;top:136px" width="22" height="18" viewBox="0 0 22 18"><rect x="1" y=".6" width="9" height="14.6" rx="4.2" fill="#fff" stroke="#888" stroke-width=".9"/><path d="M1.5 6.5V4.5A4 4 0 0 1 5.5 .8V6.5Z" fill="#f08030"/><path d="M1 6.5H10M5.5 .8V6.5" stroke="#888" stroke-width=".8" fill="none"/><path d="M5.5 .6C8 -3 12 -2.5 15 -2.5" fill="none" stroke="#999" stroke-width=".7"/></svg>
<svg class="a" style="left:1110px;top:136px" width="22" height="18" viewBox="0 0 22 18"><rect x="1" y=".6" width="9" height="14.6" rx="4.2" fill="#fff" stroke="#888" stroke-width=".9"/><path d="M9.5 6.5V4.5A4 4 0 0 0 5.5 .8V6.5Z" fill="#f08030"/><path d="M1 6.5H10M5.5 .8V6.5" stroke="#888" stroke-width=".8" fill="none"/><path d="M5.5 .6C8 -3 12 -2.5 15 -2.5" fill="none" stroke="#999" stroke-width=".7"/></svg>
<svg class="a" style="left:1152px;top:136px" width="22" height="18" viewBox="0 0 22 18"><rect x="1" y=".6" width="9" height="14.6" rx="4.2" fill="#fff" stroke="#888" stroke-width=".9"/><path d="M1.5 6.5V4.5A4 4 0 0 1 9.5 4.5V6.5Z" fill="#f08030"/><path d="M1 6.5H10M5.5 .8V6.5" stroke="#888" stroke-width=".8" fill="none"/><path d="M5.5 .6C8 -3 12 -2.5 15 -2.5" fill="none" stroke="#999" stroke-width=".7"/></svg>
<svg class="a" style="left:1192px;top:136px" width="22" height="18" viewBox="0 0 22 18"><rect x="1" y=".6" width="9" height="14.6" rx="4.2" fill="#fff" stroke="#888" stroke-width=".9"/><rect x="4.5" y="1.5" width="2" height="4" fill="#f08030"/><path d="M1 6.5H10M5.5 .8V6.5" stroke="#888" stroke-width=".8" fill="none"/><path d="M5.5 .6C8 -3 12 -2.5 15 -2.5" fill="none" stroke="#999" stroke-width=".7"/></svg>
<div class="a" style="left:1081px;top:133px;font-family:'Liberation Mono',monospace;font-size:6.6px;line-height:8px;color:#555;letter-spacing:-.1px">ROTATE</div>
<div class="a" style="left:1126px;top:133px;font-family:'Liberation Mono',monospace;font-size:6.6px;line-height:8px;color:#555;letter-spacing:-.1px">MOVE</div>
<div class="a" style="left:1168px;top:133px;font-family:'Liberation Mono',monospace;font-size:6.6px;line-height:8px;color:#555;letter-spacing:-.1px">ZOOM</div>
<div class="a" style="left:1208px;top:133px;font-family:'Liberation Mono',monospace;font-size:6.6px;line-height:8px;color:#555;letter-spacing:-.1px">EDIT</div>
<svg class="a" style="left:1086px;top:143px" width="10" height="10" viewBox="0 0 10 10"><path d="M5 0V10M0 5H10" stroke="#e87878" stroke-width="1"/><path d="M5 -.5L3.5 1.5H6.5ZM5 10.5L3.5 8.5H6.5ZM-.5 5L1.5 3.5V6.5ZM10.5 5L8.5 3.5V6.5Z" fill="#e87878"/></svg>
<svg class="a" style="left:1130px;top:143px" width="10" height="10" viewBox="0 0 10 10"><path d="M5 0V10M0 5H10" stroke="#e87878" stroke-width="1"/><path d="M5 -.5L3.5 1.5H6.5ZM5 10.5L3.5 8.5H6.5ZM-.5 5L1.5 3.5V6.5ZM10.5 5L8.5 3.5V6.5Z" fill="#e87878"/></svg>
<svg class="a" style="left:1174px;top:142px" width="6" height="12" viewBox="0 0 6 12"><path d="M3 0V12" stroke="#e87878" stroke-width="1"/><path d="M3 -.5L1.2 2H4.8ZM3 12.5L1.2 10H4.8Z" fill="#e87878"/></svg>
<div class="a" style="left:1233px;top:139px;width:13px;height:13px;background:#fff;border:1px solid #333;box-sizing:border-box"></div>
<svg class="a" style="left:1234px;top:140px" width="11" height="11" viewBox="0 0 11 11"><path d="M2 5.5L4.5 8.5L9.5 2" fill="none" stroke="#222" stroke-width="1.3"/></svg>
<svg class="a" style="left:1250px;top:134px" width="22" height="22" viewBox="0 0 22 22"><path d="M7 3.5A4.2 4.2 0 1 0 7 12.5" fill="none" stroke="#a01030" stroke-width="1.4"/><path d="M4.5 1.5L8.5 3.5L5.5 6.5Z" fill="#a01030"/><rect x="8.5" y="2.5" width="12" height="18" fill="#e8e8e8" stroke="#6c8cb4" stroke-width="1"/><path d="M8.5 11.5H20.5M14.5 2.5V20.5" stroke="#6c8cb4" stroke-width="1"/><rect x="9.5" y="12.5" width="4.5" height="7.5" fill="#f09060"/><rect x="15.5" y="12.5" width="4.5" height="7.5" fill="#f09060"/><rect x="16" y="13" width="3" height="3" fill="#e8e8e8" stroke="#6c8cb4" stroke-width=".6"/><rect x="16" y="4" width="3" height="3" fill="#fff" stroke="#999" stroke-width=".6"/></svg>
<svg class="a" style="left:1275px;top:133px" width="24" height="23" viewBox="0 0 24 23"><path d="M2 15L13 3L19 8L8 20Z" fill="#f0f0f0" stroke="#506890" stroke-width=".8"/><path d="M2 15L6.5 10L12.5 15L8 20Z" fill="#e86060" stroke="#a02020" stroke-width=".8"/><path d="M13 3L15.5 .5L21.5 5.5L19 8Z" fill="#f0d020" stroke="#a08000" stroke-width=".7"/><path d="M8 8.5L14 13.5M10 6.5L16 11.5" stroke="#20a060" stroke-width="1.2"/><path d="M9 21.5H23" stroke="#000" stroke-width="1.6"/></svg>
<svg class="a" style="left:1299px;top:133px" width="25" height="24" viewBox="0 0 25 24"><path d="M2 20.5L9 13.5" stroke="#7a4408" stroke-width="4.2" stroke-linecap="round"/><path d="M2 20.5L9 13.5" stroke="#f09028" stroke-width="2.4" stroke-linecap="round"/><circle cx="15" cy="9" r="7.6" fill="#d8ecff" stroke="#8098c8" stroke-width="1.6"/><path d="M11.5 4.5H16L18.5 7V13.5H11.5Z" fill="#fff" stroke="#1c3cb0" stroke-width="1.1"/><path d="M16 4.5V7H18.5" fill="none" stroke="#1c3cb0" stroke-width=".9"/></svg>
<div class="a" style="left:1871px;top:96px;width:47px;height:255px;background:#4c79cb;box-shadow:1px 1px 0 #2a4f86"></div>
<div class="a" style="left:1872px;top:99px;width:33px;height:248px;background:linear-gradient(90deg,#d0e3ea,#c2d9e2);box-shadow:inset 1px 1px 0 #eaf4f8"></div>
<div class="vt" style="left:1906px;top:212px">A<br>K<br>S</div>
<div class="a" style="left:1871px;top:365px;width:47px;height:252px;background:#4c79cb;box-shadow:1px 1px 0 #2a4f86"></div>
<div class="a" style="left:1872px;top:368px;width:33px;height:245px;background:linear-gradient(90deg,#d0e3ea,#c2d9e2);box-shadow:inset 1px 1px 0 #eaf4f8"></div>
<div class="vt" style="left:1906px;top:468px">E<br>D<br>I<br>T</div>
<svg class="a" style="left:1878px;top:102px" width="21" height="22" viewBox="0 0 21 22"><path d="M3 3V21M10.5 3V21M18 3V21" stroke="#e01010" stroke-width="1.4"/><path d="M2 3V21M9.5 3V21M17 3V21" stroke="#703030" stroke-width=".6"/><path d="M4 14H9M11.5 14H17" stroke="#000" stroke-width=".8"/><path d="M9.5 14L7.5 12.8V15.2ZM17.2 14L15.2 12.8V15.2Z" fill="#000"/><circle cx="3" cy="2.5" r="2" fill="#fff" stroke="#2058c0" stroke-width="1"/><circle cx="10.5" cy="2.5" r="2" fill="#fff" stroke="#2058c0" stroke-width="1"/><circle cx="18" cy="2.5" r="2" fill="#fff" stroke="#2058c0" stroke-width="1"/></svg>
<svg class="a" style="left:1878px;top:129px" width="21" height="21" viewBox="0 0 21 21"><path d="M10.5 3V20" stroke="#e01010" stroke-width="1.5"/><path d="M3 12H20" stroke="#e01010" stroke-width="1.5"/><circle cx="10.5" cy="2.5" r="2" fill="#fff" stroke="#2058c0" stroke-width="1"/><circle cx="2.5" cy="12" r="2" fill="#fff" stroke="#2058c0" stroke-width="1"/></svg>
<svg class="a" style="left:1878px;top:156px" width="22" height="22" viewBox="0 0 22 22"><path d="M2 2L19 19" stroke="#000" stroke-width="1.2"/><path d="M1 20C4 10 11 4 21 3" fill="none" stroke="#e8b810" stroke-width="1.4"/><circle cx="2" cy="2" r="2" fill="#fff" stroke="#2058c0" stroke-width="1"/><circle cx="19" cy="19" r="2" fill="#fff" stroke="#2058c0" stroke-width="1"/></svg>
<svg class="a" style="left:1878px;top:183px" width="21" height="21" viewBox="0 0 21 21"><path d="M3 2V19M18 2V19" stroke="#901818" stroke-width="1.6"/><path d="M5 13H16" stroke="#000" stroke-width=".8"/><path d="M4 13L6.5 11.6V14.4ZM17 13L14.5 11.6V14.4Z" fill="#000"/><text x="8" y="10.5" font-family="Liberation Sans,sans-serif" font-size="7.5" font-weight="bold">?</text><circle cx="3" cy="2" r="2" fill="#fff" stroke="#2058c0" stroke-width="1"/><circle cx="18" cy="2" r="2" fill="#fff" stroke="#2058c0" stroke-width="1"/><circle cx="3" cy="19" r="2" fill="#fff" stroke="#2058c0" stroke-width="1"/><circle cx="18" cy="19" r="2" fill="#fff" stroke="#2058c0" stroke-width="1"/></svg>
<svg class="a" style="left:1878px;top:210px" width="22" height="22" viewBox="0 0 22 22"><path d="M3 1.5H18" stroke="#000" stroke-width=".8"/><path d="M2 1.5L4.5 .2V2.8ZM19 1.5L16.5 .2V2.8Z" fill="#000"/><path d="M3 5V19M3 5H18L14 18" fill="none" stroke="#1c2ca0" stroke-width="1.2"/><path d="M1 18.5H21" stroke="#4860d8" stroke-width="1.2"/><circle cx="3" cy="5" r="2" fill="#fff" stroke="#e01010" stroke-width="1"/><circle cx="18" cy="5" r="2" fill="#fff" stroke="#e01010" stroke-width="1"/><circle cx="14" cy="18" r="2" fill="#fff" stroke="#e01010" stroke-width="1"/><circle cx="3" cy="18" r="2" fill="#fff" stroke="#e01010" stroke-width="1"/></svg>
<svg class="a" style="left:1878px;top:237px" width="22" height="22" viewBox="0 0 22 22"><path d="M4 2V19H19" fill="none" stroke="#9098b8" stroke-width=".9"/><path d="M4 2C11 3 17 9 19 18" fill="none" stroke="#333" stroke-width="1.6"/><circle cx="4" cy="2.5" r="2" fill="#fff" stroke="#e01010" stroke-width="1"/><circle cx="13" cy="7.5" r="2" fill="#fff" stroke="#e01010" stroke-width="1"/><circle cx="19" cy="18" r="2" fill="#fff" stroke="#e01010" stroke-width="1"/></svg>
<svg class="a" style="left:1878px;top:264px" width="22" height="22" viewBox="0 0 22 22"><path d="M4 17L17 5" stroke="#a01010" stroke-width="1.5"/><path d="M2.5 18.5L4 13.5L8 17.5ZM18.5 3.5L17 8.5L13 4.5Z" fill="#a01010"/><path d="M1 13L10 21M13 1L21 8" stroke="#1c2ca0" stroke-width="1"/><text x="3" y="8" font-family="Liberation Sans,sans-serif" font-size="7" fill="#a01010">?</text></svg>
<svg class="a" style="left:1877px;top:290px" width="23" height="22" viewBox="0 0 23 22"><path d="M2 3H21M2 11H21M2 19H21" stroke="#1c2ca0" stroke-width="1.2"/><path d="M11.5 4V18" stroke="#a01010" stroke-width="1.3"/><path d="M11.5 3L9.8 6H13.2ZM11.5 19L9.8 16H13.2Z" fill="#a01010"/><circle cx="2.5" cy="3" r="2" fill="#fff" stroke="#e01010" stroke-width="1"/><circle cx="20.5" cy="3" r="2" fill="#fff" stroke="#e01010" stroke-width="1"/><circle cx="2.5" cy="11" r="2" fill="#fff" stroke="#e01010" stroke-width="1"/><circle cx="20.5" cy="11" r="2" fill="#fff" stroke="#e01010" stroke-width="1"/><circle cx="2.5" cy="19" r="2" fill="#fff" stroke="#e01010" stroke-width="1"/><circle cx="20.5" cy="19" r="2" fill="#fff" stroke="#e01010" stroke-width="1"/></svg>
<svg class="a" style="left:1878px;top:318px" width="22" height="21" viewBox="0 0 22 21"><path d="M2 18L19 2" stroke="#000" stroke-width="1.5"/><path d="M1 18.5H21" stroke="#1c2ca0" stroke-width="1.3"/><path d="M10 18A8 8 0 0 0 8.5 12.5" fill="none" stroke="#e01010" stroke-width="1.1"/><path d="M1 19L5 15.5V19Z" fill="#e01010"/><circle cx="19" cy="2" r="2" fill="#fff" stroke="#2058c0" stroke-width="1"/></svg>
<svg class="a" style="left:1877px;top:369px" width="22" height="21" viewBox="0 0 22 21"><path d="M1 1.5H10M5.5 1.5V9" stroke="#0c1c94" stroke-width="2.2" fill="none"/><text x="2" y="19" font-family="Liberation Sans,sans-serif" font-size="6.5" font-weight="bold" fill="#a01010">C</text><path d="M10.5 11.5H20.5M15.5 11.5V19.5" stroke="#0c1c94" stroke-width="3.2" fill="none"/><path d="M10.5 11.5H20.5M15.5 11.5V19.5" stroke="#e8ecff" stroke-width="1" fill="none"/><path d="M12 2.5C15 1.5 18 3.5 18.5 7" fill="none" stroke="#0c4c9c" stroke-width="1.2"/><path d="M16.5 6L18.8 9.5L20.5 5.5Z" fill="#0c4c9c"/></svg>
<svg class="a" style="left:1877px;top:396px" width="22" height="21" viewBox="0 0 22 21"><path d="M1 1.5H10M5.5 1.5V9" stroke="#a0a0a0" stroke-width="2.2" fill="none"/><text x="2" y="19" font-family="Liberation Sans,sans-serif" font-size="6.5" font-weight="bold" fill="#a01010">M</text><path d="M10.5 11.5H20.5M15.5 11.5V19.5" stroke="#0c1c94" stroke-width="3.2" fill="none"/><path d="M10.5 11.5H20.5M15.5 11.5V19.5" stroke="#e8ecff" stroke-width="1" fill="none"/><path d="M12 2.5C15 1.5 18 3.5 18.5 7" fill="none" stroke="#0c4c9c" stroke-width="1.2"/><path d="M16.5 6L18.8 9.5L20.5 5.5Z" fill="#0c4c9c"/></svg>
<svg class="a" style="left:1877px;top:423px" width="22" height="22" viewBox="0 0 22 22"><path d="M1 1.5H10M5.5 1.5V9" stroke="#a0a0a0" stroke-width="2.2" fill="none"/><path d="M12 2.5C15 1.5 18 3.5 18.5 7" fill="none" stroke="#0c4c9c" stroke-width="1.2"/><path d="M16.5 6L18.8 9.5L20.5 5.5Z" fill="#0c4c9c"/><path d="M8 17L14 11L19.5 16.5M12 15L15.5 20" stroke="#0c1c94" stroke-width="3.2" fill="none"/><path d="M8 17L14 11L19.5 16.5M12 15L15.5 20" stroke="#e8ecff" stroke-width="1" fill="none"/></svg>
<svg class="a" style="left:1876px;top:449px" width="24" height="23" viewBox="0 0 24 23"><path d="M2 21V1H9V21M2 6H9M2 11H9" fill="none" stroke="#0c1c94" stroke-width="1.2"/><path d="M1 21H10" stroke="#555" stroke-width="1"/><text x="10.5" y="14" font-family="Liberation Sans,sans-serif" font-size="17" font-weight="bold" fill="#8c0808">?</text><circle cx="8.5" cy="14" r="4" fill="#d8f0ff" stroke="#98c4ec" stroke-width="1.2" opacity=".95"/><path d="M11.5 17.5L15.5 21.5" stroke="#1c3cc8" stroke-width="2.4"/></svg>
<svg class="a" style="left:1879px;top:481px" width="17" height="12" viewBox="0 0 17 12"><rect x=".8" y=".8" width="15.4" height="9.4" rx="2" fill="#f8e800" stroke="#000" stroke-width="1.2"/><path d="M3.5 3V8M5.5 3V8M8.5 3V8M10.5 3V8M13 3V8M3.5 5.5H5.5M8.5 3H10.5M8.5 8H10.5" stroke="#806000" stroke-width=".9" fill="none"/></svg>
<svg class="a" style="left:1876px;top:503px" width="24" height="23" viewBox="0 0 24 23"><path d="M2 15L13 3L19 8L8 20Z" fill="#f0f0f0" stroke="#506890" stroke-width=".8"/><path d="M2 15L6.5 10L12.5 15L8 20Z" fill="#e86060" stroke="#a02020" stroke-width=".8"/><path d="M13 3L15.5 .5L21.5 5.5L19 8Z" fill="#f0d020" stroke="#a08000" stroke-width=".7"/><path d="M8 8.5L14 13.5M10 6.5L16 11.5" stroke="#20a060" stroke-width="1.2"/><path d="M9 21.5H23" stroke="#000" stroke-width="1.6"/></svg>
<svg class="a" style="left:1876px;top:532px" width="22" height="22" viewBox="0 0 22 22"><path d="M7 3.5A4.2 4.2 0 1 0 7 12.5" fill="none" stroke="#a01030" stroke-width="1.4"/><path d="M4.5 1.5L8.5 3.5L5.5 6.5Z" fill="#a01030"/><rect x="8.5" y="2.5" width="12" height="18" fill="#e8e8e8" stroke="#6c8cb4" stroke-width="1"/><path d="M8.5 11.5H20.5M14.5 2.5V20.5" stroke="#6c8cb4" stroke-width="1"/><rect x="9.5" y="12.5" width="4.5" height="7.5" fill="#f09060"/><rect x="15.5" y="12.5" width="4.5" height="7.5" fill="#f09060"/><rect x="16" y="13" width="3" height="3" fill="#e8e8e8" stroke="#6c8cb4" stroke-width=".6"/><rect x="16" y="4" width="3" height="3" fill="#fff" stroke="#999" stroke-width=".6"/></svg>
<div class="a" style="left:3px;top:996px;width:227px;height:44px;background:#4c79cb;box-shadow:1px 0 0 #2a4f86,-1px -1px 0 #6d95d8"></div>
<div class="a" style="left:5px;top:997px;width:222px;height:29px;background:linear-gradient(#d4e6ec,#c2d9e2)"></div>
<div class="a" style="left:3px;top:1026px;width:227px;height:14px;line-height:14px;text-align:center;color:#fff;font-weight:bold;font-size:10px;letter-spacing:.4px">VIEW</div>
<svg class="a" style="left:12px;top:999px" width="20" height="25" viewBox="0 0 20 25"><path d="M.5 .5H13L18.5 6V24H.5Z" fill="#f8fcff" stroke="#8c9cb8"/><path d="M13 .5V6H18.5" fill="#d8e0f0" stroke="#8c9cb8"/><path d="M5 12A4.6 4.6 0 0 1 13 9.5" fill="none" stroke="#18a028" stroke-width="2.4"/><path d="M10.5 6L15.5 8.5L11.5 12.5Z" fill="#18a028"/><path d="M14 14A4.6 4.6 0 0 1 6 16.5" fill="none" stroke="#18a028" stroke-width="2.4"/><path d="M8.5 20L3.5 17.5L7.5 13.5Z" fill="#18a028"/></svg>
<svg class="a" style="left:40px;top:999px" width="27" height="25" viewBox="0 0 27 25"><path d="M3.5 20.5L10 13.5" stroke="#6c4010" stroke-width="5.6" stroke-linecap="round"/><path d="M3.5 20.5L10 13.5" stroke="#f09028" stroke-width="3.6" stroke-linecap="round"/><circle cx="15.5" cy="8" r="6.8" fill="#d8ecff" stroke="#7c98c8" stroke-width="1.6"/><path d="M12.5 4H16.5L18.5 6V12H12.5Z" fill="#fff" stroke="#1c3cb0" stroke-width="1"/><text x="11.5" y="24" font-family="Liberation Mono,monospace" font-size="7.5" font-weight="bold" fill="#a01010" letter-spacing="-.6">ALL</text></svg>
<svg class="a" style="left:71px;top:999px" width="27" height="25" viewBox="0 0 27 25"><path d="M3.5 20.5L10 13.5" stroke="#6c4010" stroke-width="5.6" stroke-linecap="round"/><path d="M3.5 20.5L10 13.5" stroke="#f09028" stroke-width="3.6" stroke-linecap="round"/><circle cx="15.5" cy="8" r="6.8" fill="#d8ecff" stroke="#7c98c8" stroke-width="1.6"/><rect x="11.5" y="4.5" width="8" height="6.5" fill="#eef4ff" stroke="#1c3cb0" stroke-width="1"/><text x="11.5" y="24" font-family="Liberation Mono,monospace" font-size="7.5" font-weight="bold" fill="#a01010" letter-spacing="-.6">WIN</text></svg>
<svg class="a" style="left:102px;top:999px" width="27" height="25" viewBox="0 0 27 25"><path d="M3.5 20.5L10 13.5" stroke="#6c4010" stroke-width="5.6" stroke-linecap="round"/><path d="M3.5 20.5L10 13.5" stroke="#f09028" stroke-width="3.6" stroke-linecap="round"/><circle cx="15.5" cy="8" r="6.8" fill="#d8ecff" stroke="#7c98c8" stroke-width="1.6"/><path d="M11.5 8H19.5M15.5 4V12" stroke="#1c3cb0" stroke-width="1.8"/><text x="11.5" y="24" font-family="Liberation Mono,monospace" font-size="7.5" font-weight="bold" fill="#a01010" letter-spacing="-.6"> IN</text></svg>
<svg class="a" style="left:133px;top:999px" width="27" height="25" viewBox="0 0 27 25"><path d="M3.5 20.5L10 13.5" stroke="#6c4010" stroke-width="5.6" stroke-linecap="round"/><path d="M3.5 20.5L10 13.5" stroke="#f09028" stroke-width="3.6" stroke-linecap="round"/><circle cx="15.5" cy="8" r="6.8" fill="#d8ecff" stroke="#7c98c8" stroke-width="1.6"/><path d="M11.5 8H19.5" stroke="#1c3cb0" stroke-width="1.8"/><text x="11.5" y="24" font-family="Liberation Mono,monospace" font-size="7.5" font-weight="bold" fill="#a01010" letter-spacing="-.6">OUT</text></svg>
<svg class="a" style="left:165px;top:1000px" width="24" height="24" viewBox="0 0 24 24"><path d="M12 1V21M2 10.5H22" stroke="#8c1010" stroke-width="2.2" stroke-dasharray="3.4 1.8"/><path d="M12 5.5V15.5M7 10.5H17" stroke="#8c1010" stroke-width="2.4"/><circle cx="5" cy="17.5" r="3.3" fill="#f8f000" stroke="#000" stroke-width="1"/><path d="M15.5 18.5H22M18.8 15.2V21.8" stroke="#e01010" stroke-width="1.5"/></svg>
<svg class="a" style="left:195px;top:1000px" width="26" height="23" viewBox="0 0 26 23"><path d="M.6 .6H6.2V3.1H19.4V.6H24.6V21.2H16.2V18.7H8.7V21.2H.6Z" fill="#20a8f0" stroke="#0c1c60" stroke-width="1.2"/><path d="M19.4 3.1V11H24.6" fill="none" stroke="#0c1c60" stroke-width="1"/><rect x="3.1" y="3.8" width="13.8" height="11.2" fill="#f0fcff" stroke="#189088" stroke-width="1"/><path d="M5.5 3.8V15M3.1 11.5H16.9M14 3.8V15" stroke="#a09078" stroke-width=".7" fill="none"/></svg>
</body></html>
